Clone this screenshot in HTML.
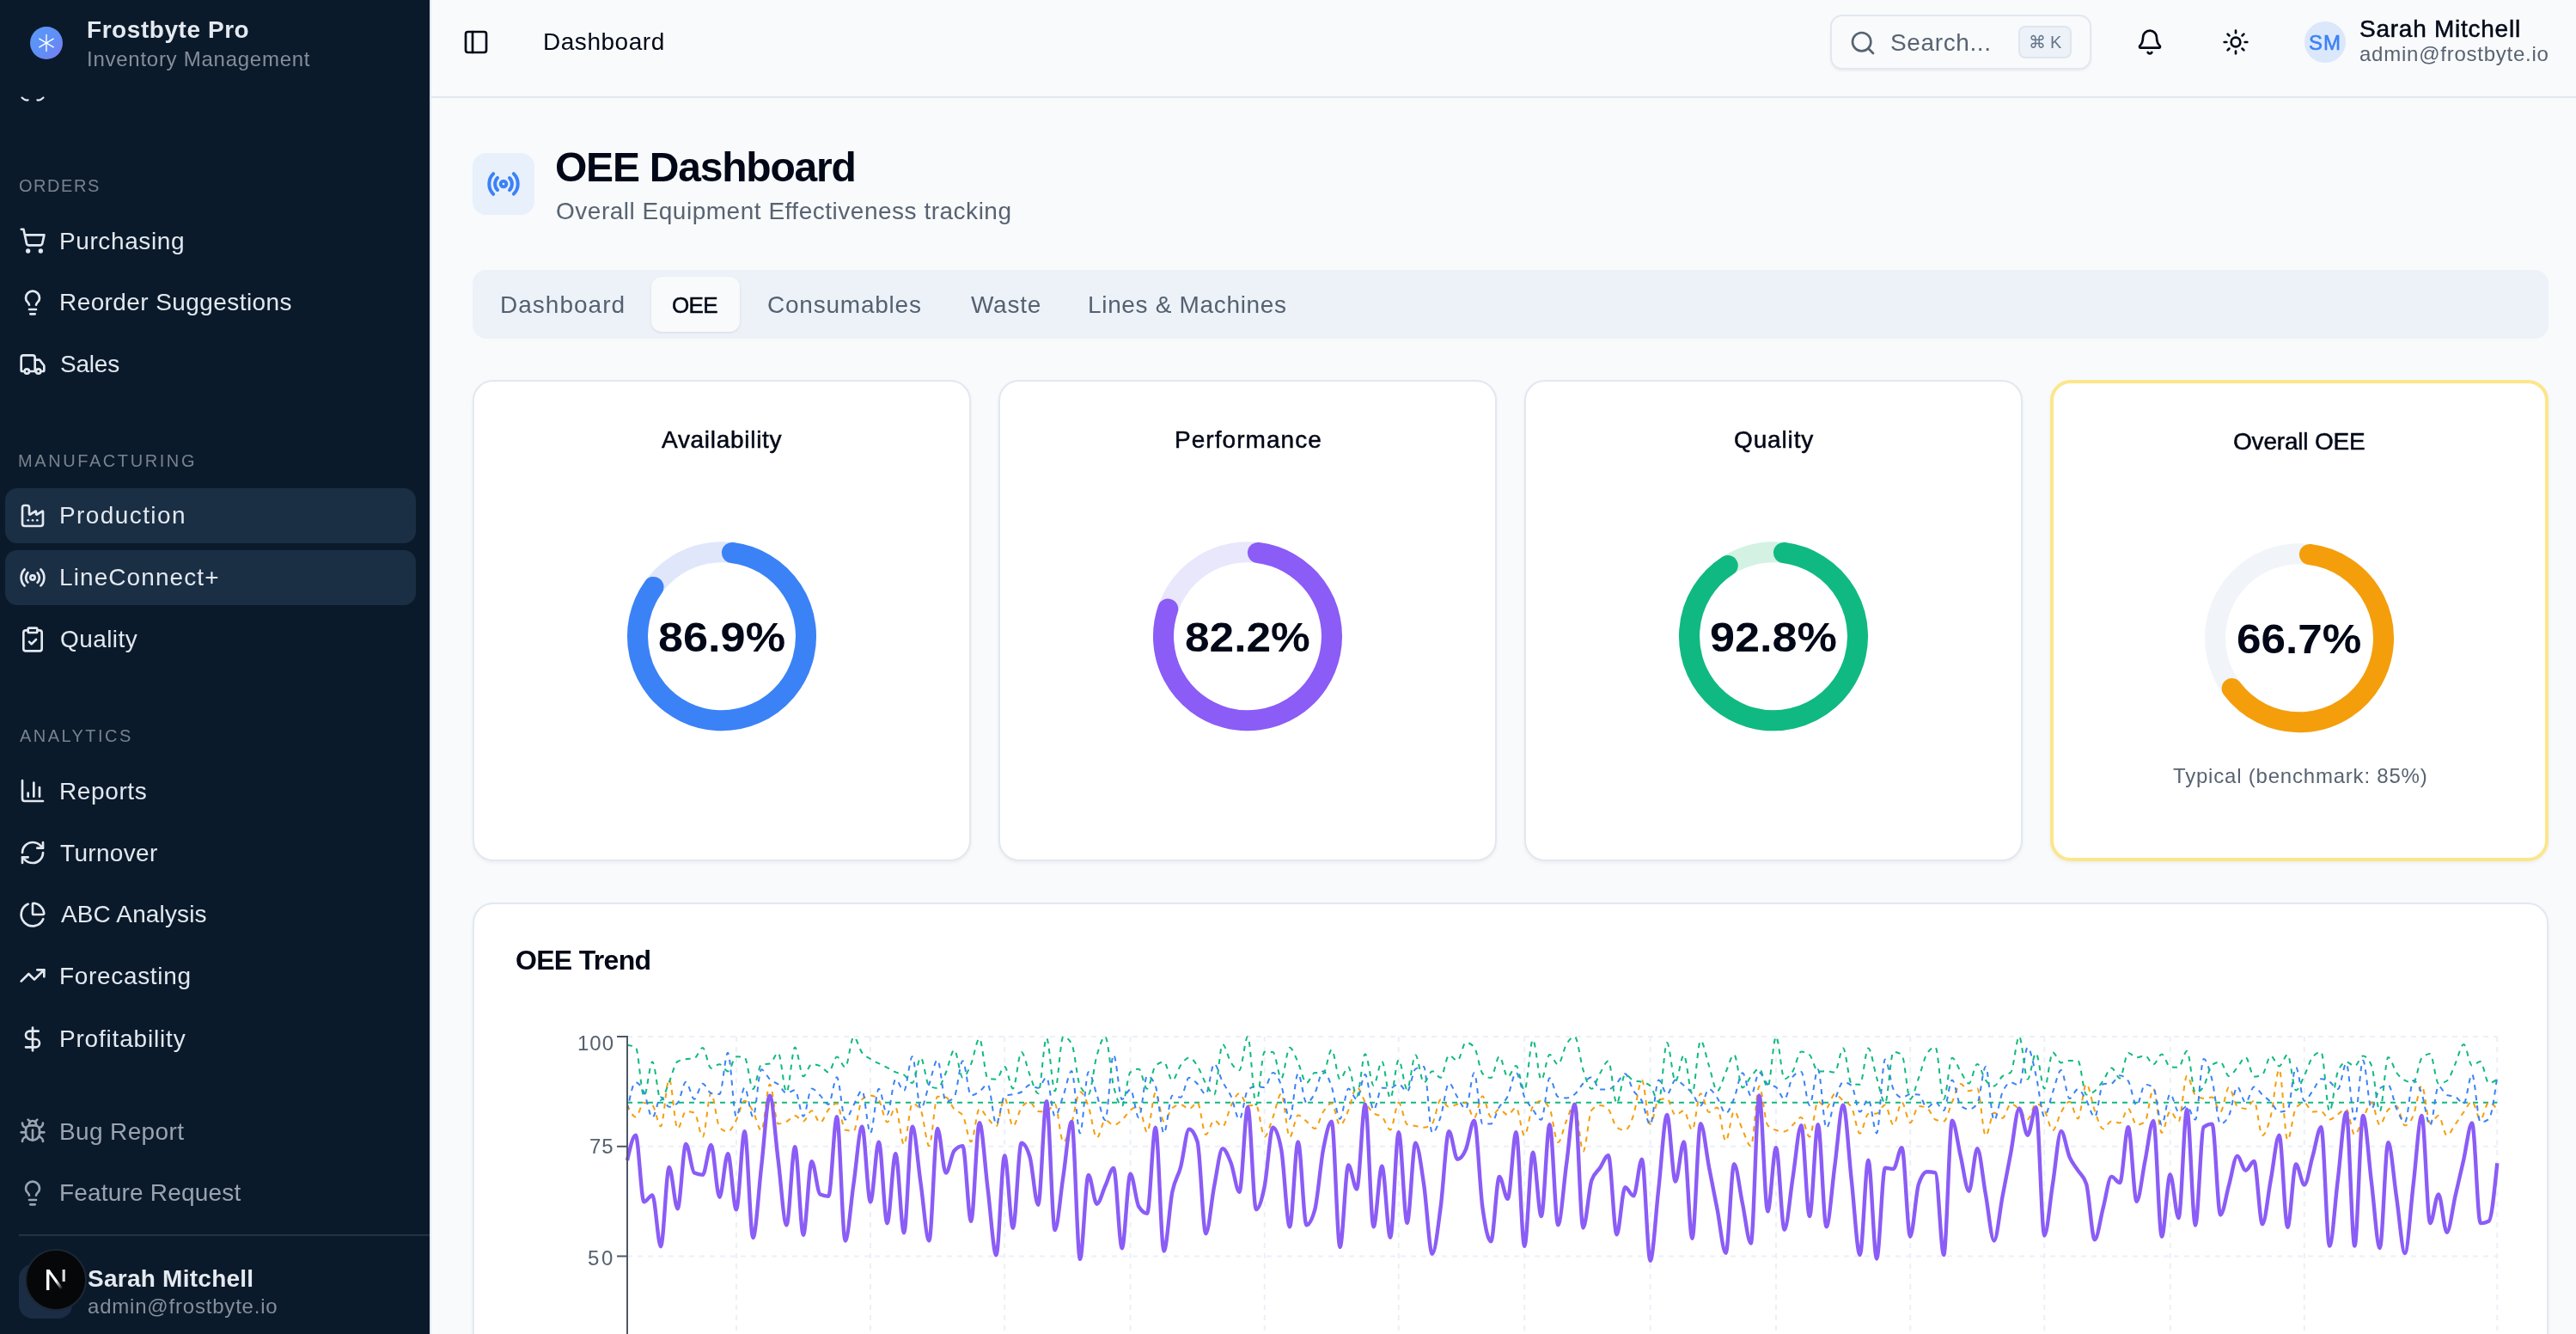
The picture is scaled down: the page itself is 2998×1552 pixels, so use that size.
<!DOCTYPE html><html><head><meta charset="utf-8"><style>
html,body{margin:0;padding:0;}
body{width:2998px;height:1552px;overflow:hidden;position:relative;background:#f8fafc;font-family:"Liberation Sans",sans-serif;}
.t{position:absolute;white-space:nowrap;will-change:transform;}
.b{position:absolute;box-sizing:border-box;}
.ic{position:absolute;overflow:visible;}
</style></head><body>
<div class="b" style="left:0px;top:0px;width:500px;height:1552px;background:#0b1a2a;"></div>
<div class="b" style="left:500px;top:0px;width:2px;height:1552px;background:#e2e8f0;"></div>
<div class="b" style="left:35px;top:31px;width:38px;height:38px;border-radius:50%;background:linear-gradient(135deg,#5a98f8 0%,#5f8ff6 55%,#7b7cf0 100%);"></div>
<svg class="ic" style="left:35px;top:31px;width:38px;height:38px" viewBox="0 0 38 38" stroke="#fff" stroke-width="1.4" stroke-linecap="round"><line x1="19" y1="9.5" x2="19" y2="28.5"/><line x1="10.8" y1="14.2" x2="27.2" y2="23.8"/><line x1="10.8" y1="23.8" x2="27.2" y2="14.2"/></svg>
<svg class="ic" style="left:0;top:0;width:200px;height:130px" viewBox="0 0 200 130" fill="none" stroke="#e2e8f0" stroke-width="2.2" stroke-linecap="round"><path d="M25.5 113.6 Q29 117.4 32.6 116.4"/><path d="M43.4 116.4 Q47 117.4 50.5 113.6"/></svg>
<svg class="ic" style="left:22.0px;top:264.3px;width:32px;height:32px;" viewBox="0 0 24 24" fill="none" stroke="#e2e8f0" stroke-width="2" stroke-linecap="round" stroke-linejoin="round"><circle cx="8" cy="21" r="1"/><circle cx="19" cy="21" r="1"/><path d="M2.05 2.05h2l2.66 12.42a2 2 0 0 0 2 1.58h9.78a2 2 0 0 0 1.95-1.57l1.65-7.43H5.12"/></svg>
<svg class="ic" style="left:22.0px;top:336.0px;width:32px;height:32px;" viewBox="0 0 24 24" fill="none" stroke="#e2e8f0" stroke-width="2" stroke-linecap="round" stroke-linejoin="round"><path d="M15 14c.2-1 .7-1.7 1.5-2.5 1-.9 1.5-2.2 1.5-3.5A6 6 0 0 0 6 8c0 1 .2 2.2 1.5 3.5.7.7 1.3 1.5 1.5 2.5"/><path d="M9 18h6"/><path d="M10 22h4"/></svg>
<svg class="ic" style="left:22.0px;top:407.5px;width:32px;height:32px;" viewBox="0 0 24 24" fill="none" stroke="#e2e8f0" stroke-width="2" stroke-linecap="round" stroke-linejoin="round"><path d="M14 18V6a2 2 0 0 0-2-2H4a2 2 0 0 0-2 2v11a1 1 0 0 0 1 1h2"/><path d="M15 18H9"/><path d="M19 18h2a1 1 0 0 0 1-1v-3.65a1 1 0 0 0-.22-.624l-3.48-4.35A1 1 0 0 0 17.52 8H14"/><circle cx="17" cy="18" r="2"/><circle cx="7" cy="18" r="2"/></svg>
<div class="b" style="left:6px;top:567.8px;width:478px;height:64px;background:#1a2e44;border-radius:14px;"></div>
<svg class="ic" style="left:22.0px;top:583.8px;width:32px;height:32px;" viewBox="0 0 24 24" fill="none" stroke="#e2e8f0" stroke-width="2" stroke-linecap="round" stroke-linejoin="round"><path d="M12 16h.01"/><path d="M16 16h.01"/><path d="M3 19a2 2 0 0 0 2 2h14a2 2 0 0 0 2-2V8.5a.5.5 0 0 0-.769-.422l-4.462 2.844A.5.5 0 0 1 15 10.5v-2a.5.5 0 0 0-.769-.422L9.77 10.922A.5.5 0 0 1 9 10.5V5a2 2 0 0 0-2-2H5a2 2 0 0 0-2 2z"/><path d="M8 16h.01"/></svg>
<div class="b" style="left:6px;top:639.8px;width:478px;height:64px;background:#1a2e44;border-radius:14px;"></div>
<svg class="ic" style="left:22.0px;top:655.8px;width:32px;height:32px;" viewBox="0 0 24 24" fill="none" stroke="#e2e8f0" stroke-width="2" stroke-linecap="round" stroke-linejoin="round"><path d="M4.9 19.1C1 15.2 1 8.8 4.9 4.9"/><path d="M7.8 16.2c-2.3-2.3-2.3-6.1 0-8.5"/><circle cx="12" cy="12" r="2"/><path d="M16.2 7.8c2.3 2.3 2.3 6.1 0 8.5"/><path d="M19.1 4.9C23 8.8 23 15.1 19.1 19"/></svg>
<svg class="ic" style="left:22.0px;top:727.8px;width:32px;height:32px;" viewBox="0 0 24 24" fill="none" stroke="#e2e8f0" stroke-width="2" stroke-linecap="round" stroke-linejoin="round"><rect width="8" height="4" x="8" y="2" rx="1" ry="1"/><path d="M16 4h2a2 2 0 0 1 2 2v14a2 2 0 0 1-2 2H6a2 2 0 0 1-2-2V6a2 2 0 0 1 2-2h2"/><path d="m9 14 2 2 4-4"/></svg>
<svg class="ic" style="left:22.0px;top:904.4px;width:32px;height:32px;" viewBox="0 0 24 24" fill="none" stroke="#e2e8f0" stroke-width="2" stroke-linecap="round" stroke-linejoin="round"><path d="M3 3v16a2 2 0 0 0 2 2h16"/><path d="M18 17V9"/><path d="M13 17V5"/><path d="M8 17v-3"/></svg>
<svg class="ic" style="left:22.0px;top:976.3px;width:32px;height:32px;" viewBox="0 0 24 24" fill="none" stroke="#e2e8f0" stroke-width="2" stroke-linecap="round" stroke-linejoin="round"><path d="M3 12a9 9 0 0 1 9-9 9.75 9.75 0 0 1 6.74 2.74L21 8"/><path d="M21 3v5h-5"/><path d="M21 12a9 9 0 0 1-9 9 9.75 9.75 0 0 1-6.74-2.74L3 16"/><path d="M8 16H3v5"/></svg>
<svg class="ic" style="left:22.0px;top:1047.6px;width:32px;height:32px;" viewBox="0 0 24 24" fill="none" stroke="#e2e8f0" stroke-width="2" stroke-linecap="round" stroke-linejoin="round"><path d="M21 12c.552 0 1.005-.449.95-.998a10 10 0 0 0-8.953-8.951c-.55-.055-.998.398-.998.95v8a1 1 0 0 0 1 1z"/><path d="M21.21 15.89A10 10 0 1 1 8 2.83"/></svg>
<svg class="ic" style="left:22.0px;top:1119.3px;width:32px;height:32px;" viewBox="0 0 24 24" fill="none" stroke="#e2e8f0" stroke-width="2" stroke-linecap="round" stroke-linejoin="round"><polyline points="22 7 13.5 15.5 8.5 10.5 2 17"/><polyline points="16 7 22 7 22 13"/></svg>
<svg class="ic" style="left:22.0px;top:1192.7px;width:32px;height:32px;" viewBox="0 0 24 24" fill="none" stroke="#e2e8f0" stroke-width="2" stroke-linecap="round" stroke-linejoin="round"><line x1="12" x2="12" y1="2" y2="22"/><path d="M17 5H9.5a3.5 3.5 0 0 0 0 7h5a3.5 3.5 0 0 1 0 7H6"/></svg>
<svg class="ic" style="left:22.0px;top:1300.3px;width:32px;height:32px;" viewBox="0 0 24 24" fill="none" stroke="#9aa3b0" stroke-width="2" stroke-linecap="round" stroke-linejoin="round"><path d="m8 2 1.88 1.88"/><path d="M14.12 3.88 16 2"/><path d="M9 7.13v-1a3.003 3.003 0 1 1 6 0v1"/><path d="M12 20c-3.3 0-6-2.7-6-6v-3a4 4 0 0 1 4-4h4a4 4 0 0 1 4 4v3c0 3.3-2.7 6-6 6"/><path d="M12 20v-9"/><path d="M6.53 9C4.6 8.8 3 7.1 3 5"/><path d="M6 13H2"/><path d="M3 21c0-2.1 1.7-3.9 3.8-4"/><path d="M20.97 5c0 2.1-1.6 3.8-3.5 4"/><path d="M22 13h-4"/><path d="M17.2 17c2.1.1 3.8 1.9 3.8 4"/></svg>
<svg class="ic" style="left:22.0px;top:1371.7px;width:32px;height:32px;" viewBox="0 0 24 24" fill="none" stroke="#9aa3b0" stroke-width="2" stroke-linecap="round" stroke-linejoin="round"><path d="M15 14c.2-1 .7-1.7 1.5-2.5 1-.9 1.5-2.2 1.5-3.5A6 6 0 0 0 6 8c0 1 .2 2.2 1.5 3.5.7.7 1.3 1.5 1.5 2.5"/><path d="M9 18h6"/><path d="M10 22h4"/></svg>
<div class="b" style="left:22px;top:1436px;width:478px;height:2px;background:#253243;"></div>
<div class="b" style="left:22px;top:1471px;width:62px;height:63px;background:#1b2d44;border-radius:16px;"></div>
<div class="b" style="left:29px;top:1453px;width:72px;height:72px;background:#050709;border-radius:50%;border:2px solid #1c2733;"></div>
<svg class="ic" style="left:29px;top:1453px;width:72px;height:72px" viewBox="0 0 72 72"><defs><linearGradient id="ng" x1="0" y1="0" x2="1" y2="1"><stop offset="0.55" stop-color="#fff"/><stop offset="0.9" stop-color="#fff" stop-opacity="0"/></linearGradient></defs><path d="M25 48V24h3.6l17.4 24h-4L28.4 29v19z" fill="url(#ng)"/><rect x="43.6" y="24" width="3.2" height="14" fill="#fff" fill-opacity="0.85"/></svg>
<div class="b" style="left:502px;top:112px;width:2496px;height:2px;background:#e2e8f0;"></div>
<svg class="ic" style="left:538.0px;top:33.0px;width:32px;height:32px;" viewBox="0 0 24 24" fill="none" stroke="#020817" stroke-width="2" stroke-linecap="round" stroke-linejoin="round"><rect width="18" height="18" x="3" y="3" rx="2"/><path d="M9 3v18"/></svg>
<div class="b" style="left:2130px;top:17px;width:304px;height:64px;border:2px solid #e2e8f0;border-radius:14px;background:#f8fafc;box-shadow:0 2px 3px rgba(15,23,42,0.05);"></div>
<svg class="ic" style="left:2152.0px;top:34.0px;width:32px;height:32px;" viewBox="0 0 24 24" fill="none" stroke="#586371" stroke-width="2" stroke-linecap="round" stroke-linejoin="round"><circle cx="11" cy="11" r="8"/><path d="m21 21-4.3-4.3"/></svg>
<div class="b" style="left:2349px;top:30px;width:62px;height:38px;border:2px solid #dfe6ee;border-radius:8px;background:#edf2f8;"></div>
<div class="t" style="left:2349px;top:38px;width:62px;text-align:center;font-size:20px;line-height:22px;color:#64748b">&#8984; K</div>
<svg class="ic" style="left:2486.0px;top:33.0px;width:32px;height:32px;" viewBox="0 0 24 24" fill="none" stroke="#020817" stroke-width="2" stroke-linecap="round" stroke-linejoin="round"><path d="M10.268 21a2 2 0 0 0 3.464 0"/><path d="M3.262 15.326A1 1 0 0 0 4 17h16a1 1 0 0 0 .74-1.673C19.41 13.956 18 12.499 18 8A6 6 0 0 0 6 8c0 4.499-1.411 5.956-2.738 7.326"/></svg>
<svg class="ic" style="left:2586.0px;top:33.0px;width:32px;height:32px;" viewBox="0 0 24 24" fill="none" stroke="#020817" stroke-width="2" stroke-linecap="round" stroke-linejoin="round"><circle cx="12" cy="12" r="4"/><path d="M12 2v2"/><path d="M12 20v2"/><path d="m4.93 4.93 1.41 1.41"/><path d="m17.66 17.66 1.41 1.41"/><path d="M2 12h2"/><path d="M20 12h2"/><path d="m6.34 17.66-1.41 1.41"/><path d="m19.07 4.93-1.41 1.41"/></svg>
<div class="b" style="left:2682px;top:25px;width:48px;height:48px;border-radius:50%;background:#dbe7fb;"></div>
<div class="b" style="left:550px;top:178px;width:72px;height:72px;border-radius:16px;background:#e8f0fc;"></div>
<svg class="ic" style="left:566.0px;top:194.0px;width:40px;height:40px;" viewBox="0 0 24 24" fill="none" stroke="#3b82f6" stroke-width="2.4" stroke-linecap="round" stroke-linejoin="round"><path d="M4.9 19.1C1 15.2 1 8.8 4.9 4.9"/><path d="M7.8 16.2c-2.3-2.3-2.3-6.1 0-8.5"/><circle cx="12" cy="12" r="2"/><path d="M16.2 7.8c2.3 2.3 2.3 6.1 0 8.5"/><path d="M19.1 4.9C23 8.8 23 15.1 19.1 19"/></svg>
<div class="b" style="left:550px;top:314px;width:2416px;height:80px;border-radius:16px;background:#edf2f9;"></div>
<div class="b" style="left:758px;top:322px;width:103px;height:64px;border-radius:12px;background:#f8fafc;box-shadow:0 1px 3px rgba(15,23,42,0.10);"></div>
<div class="b" style="left:550px;top:442px;width:580px;height:560px;border:2px solid #e2e8f0;border-radius:24px;background:#fff;box-shadow:0 2px 4px rgba(15,23,42,0.05);"></div>
<div class="b" style="left:1162px;top:442px;width:580px;height:560px;border:2px solid #e2e8f0;border-radius:24px;background:#fff;box-shadow:0 2px 4px rgba(15,23,42,0.05);"></div>
<div class="b" style="left:1774px;top:442px;width:580px;height:560px;border:2px solid #e2e8f0;border-radius:24px;background:#fff;box-shadow:0 2px 4px rgba(15,23,42,0.05);"></div>
<div class="b" style="left:2386px;top:442px;width:580px;height:560px;border:4px solid #fde68a;border-radius:24px;background:#fff;box-shadow:0 2px 4px rgba(15,23,42,0.05);"></div>
<svg class="ic" width="2998" height="1552" style="left:0;top:0"><circle cx="840" cy="740.3" r="98" fill="none" stroke="#e0e7fb" stroke-width="24"/><path d="M851.94 643.03 A98 98 0 1 1 760.56 682.92" fill="none" stroke="#3b82f6" stroke-width="24" stroke-linecap="round"/><circle cx="1452" cy="740.3" r="98" fill="none" stroke="#e9e7fb" stroke-width="24"/><path d="M1463.94 643.03 A98 98 0 1 1 1359.29 708.52" fill="none" stroke="#8b5cf6" stroke-width="24" stroke-linecap="round"/><circle cx="2064" cy="740.3" r="98" fill="none" stroke="#d3f2e4" stroke-width="24"/><path d="M2075.94 643.03 A98 98 0 1 1 2010.74 658.04" fill="none" stroke="#10b981" stroke-width="24" stroke-linecap="round"/><circle cx="2676" cy="742.3" r="98" fill="none" stroke="#f1f4f8" stroke-width="24"/><path d="M2687.94 645.03 A98 98 0 1 1 2597.61 801.11" fill="none" stroke="#f59e0b" stroke-width="24" stroke-linecap="round"/></svg>
<div class="b" style="left:550px;top:1050px;width:2416px;height:600px;border:2px solid #e2e8f0;border-radius:24px;background:#fff;box-shadow:0 2px 4px rgba(15,23,42,0.05);"></div>
<svg class="ic" width="2998" height="1552" style="left:0;top:0"><line x1="730" y1="1206.0" x2="2906.3" y2="1206.0" stroke="#ebf0f7" stroke-width="2" stroke-dasharray="6 6"/><line x1="730" y1="1333.8" x2="2906.3" y2="1333.8" stroke="#ebf0f7" stroke-width="2" stroke-dasharray="6 6"/><line x1="730" y1="1461.5" x2="2906.3" y2="1461.5" stroke="#ebf0f7" stroke-width="2" stroke-dasharray="6 6"/><line x1="730" y1="1589.2" x2="2906.3" y2="1589.2" stroke="#ebf0f7" stroke-width="2" stroke-dasharray="6 6"/><line x1="856.9" y1="1206" x2="856.9" y2="1560" stroke="#ebf0f7" stroke-width="2" stroke-dasharray="6 6"/><line x1="1013.0" y1="1206" x2="1013.0" y2="1560" stroke="#ebf0f7" stroke-width="2" stroke-dasharray="6 6"/><line x1="1169.2" y1="1206" x2="1169.2" y2="1560" stroke="#ebf0f7" stroke-width="2" stroke-dasharray="6 6"/><line x1="1315.6" y1="1206" x2="1315.6" y2="1560" stroke="#ebf0f7" stroke-width="2" stroke-dasharray="6 6"/><line x1="1471.7" y1="1206" x2="1471.7" y2="1560" stroke="#ebf0f7" stroke-width="2" stroke-dasharray="6 6"/><line x1="1627.8" y1="1206" x2="1627.8" y2="1560" stroke="#ebf0f7" stroke-width="2" stroke-dasharray="6 6"/><line x1="1774.2" y1="1206" x2="1774.2" y2="1560" stroke="#ebf0f7" stroke-width="2" stroke-dasharray="6 6"/><line x1="1920.6" y1="1206" x2="1920.6" y2="1560" stroke="#ebf0f7" stroke-width="2" stroke-dasharray="6 6"/><line x1="2067.0" y1="1206" x2="2067.0" y2="1560" stroke="#ebf0f7" stroke-width="2" stroke-dasharray="6 6"/><line x1="2223.2" y1="1206" x2="2223.2" y2="1560" stroke="#ebf0f7" stroke-width="2" stroke-dasharray="6 6"/><line x1="2379.3" y1="1206" x2="2379.3" y2="1560" stroke="#ebf0f7" stroke-width="2" stroke-dasharray="6 6"/><line x1="2525.7" y1="1206" x2="2525.7" y2="1560" stroke="#ebf0f7" stroke-width="2" stroke-dasharray="6 6"/><line x1="2681.8" y1="1206" x2="2681.8" y2="1560" stroke="#ebf0f7" stroke-width="2" stroke-dasharray="6 6"/><line x1="2906.3" y1="1206" x2="2906.3" y2="1560" stroke="#ebf0f7" stroke-width="2" stroke-dasharray="6 6"/><line x1="730" y1="1282.7" x2="2906.3" y2="1282.7" stroke="#10b981" stroke-width="2" stroke-dasharray="6 6"/><path d="M730.0,1285.4C733.3,1292.5 736.5,1299.5 739.8,1299.5C743.0,1299.5 746.3,1283.0 749.5,1283.0C752.8,1283.0 756.0,1283.9 759.3,1285.8C762.5,1287.6 765.8,1310.5 769.0,1310.5C772.3,1310.5 775.5,1255.4 778.8,1255.4C782.0,1255.4 785.3,1313.1 788.6,1313.1C791.8,1313.1 795.1,1293.1 798.3,1293.1C801.6,1293.1 804.8,1293.6 808.1,1294.5C811.3,1295.5 814.6,1322.6 817.8,1322.6C821.1,1322.6 824.3,1271.6 827.6,1271.6C830.8,1271.6 834.1,1307.9 837.4,1311.4C840.6,1314.8 843.9,1316.5 847.1,1316.5C850.4,1316.5 853.6,1309.1 856.9,1303.1C860.1,1297.1 863.4,1280.7 866.6,1280.7C869.9,1280.7 873.1,1287.2 876.4,1292.9C879.6,1298.7 882.9,1315.3 886.1,1315.3C889.4,1315.3 892.7,1261.5 895.9,1261.5C899.2,1261.5 902.4,1307.5 905.7,1307.5C908.9,1307.5 912.2,1306.6 915.4,1305.0C918.7,1303.5 921.9,1298.1 925.2,1298.1C928.4,1298.1 931.7,1304.4 934.9,1304.4C938.2,1304.4 941.4,1292.3 944.7,1292.3C948.0,1292.3 951.2,1306.1 954.5,1306.1C957.7,1306.1 961.0,1294.7 964.2,1291.0C967.5,1287.3 970.7,1283.8 974.0,1283.8C977.2,1283.8 980.5,1313.8 983.7,1314.6C987.0,1315.3 990.2,1315.7 993.5,1315.7C996.8,1315.7 1000.0,1282.2 1003.3,1279.1C1006.5,1276.0 1009.8,1274.5 1013.0,1274.5C1016.3,1274.5 1019.5,1276.3 1022.8,1279.9C1026.0,1283.5 1029.3,1305.5 1032.5,1305.5C1035.8,1305.5 1039.0,1288.7 1042.3,1288.7C1045.5,1288.7 1048.8,1331.7 1052.1,1331.7C1055.3,1331.7 1058.6,1283.8 1061.8,1283.8C1065.1,1283.8 1068.3,1286.5 1071.6,1291.7C1074.8,1297.0 1078.1,1333.1 1081.3,1333.1C1084.6,1333.1 1087.8,1275.7 1091.1,1275.7C1094.3,1275.7 1097.6,1275.9 1100.8,1276.4C1104.1,1276.9 1107.4,1287.0 1110.6,1290.4C1113.9,1293.9 1117.1,1292.7 1120.4,1297.3C1123.6,1301.8 1126.9,1328.2 1130.1,1328.2C1133.4,1328.2 1136.6,1290.0 1139.9,1290.0C1143.1,1290.0 1146.4,1297.7 1149.6,1301.0C1152.9,1304.4 1156.2,1310.3 1159.4,1310.3C1162.7,1310.3 1165.9,1277.4 1169.2,1277.4C1172.4,1277.4 1175.7,1310.3 1178.9,1310.3C1182.2,1310.3 1185.4,1293.1 1188.7,1288.7C1191.9,1284.2 1195.2,1282.0 1198.4,1282.0C1201.7,1282.0 1204.9,1292.9 1208.2,1293.1C1211.5,1293.3 1214.7,1293.4 1218.0,1293.4C1221.2,1293.4 1224.5,1284.4 1227.7,1284.4C1231.0,1284.4 1234.2,1328.8 1237.5,1328.8C1240.7,1328.8 1244.0,1315.9 1247.2,1306.2C1250.5,1296.4 1253.7,1270.3 1257.0,1270.3C1260.2,1270.3 1263.5,1278.4 1266.8,1287.3C1270.0,1296.2 1273.3,1323.8 1276.5,1323.8C1279.8,1323.8 1283.0,1303.3 1286.3,1303.3C1289.5,1303.3 1292.8,1308.9 1296.0,1308.9C1299.3,1308.9 1302.5,1306.0 1305.8,1303.1C1309.0,1300.3 1312.3,1294.3 1315.6,1291.7C1318.8,1289.0 1322.1,1287.1 1325.3,1287.1C1328.6,1287.1 1331.8,1317.3 1335.1,1317.3C1338.3,1317.3 1341.6,1271.1 1344.8,1271.1C1348.1,1271.1 1351.3,1304.5 1354.6,1304.5C1357.8,1304.5 1361.1,1291.9 1364.3,1289.2C1367.6,1286.5 1370.9,1285.1 1374.1,1285.1C1377.4,1285.1 1380.6,1290.1 1383.9,1290.1C1387.1,1290.1 1390.4,1282.6 1393.6,1282.6C1396.9,1282.6 1400.1,1320.1 1403.4,1320.1C1406.6,1320.1 1409.9,1303.3 1413.1,1303.3C1416.4,1303.3 1419.6,1310.7 1422.9,1310.7C1426.2,1310.7 1429.4,1292.9 1432.7,1286.5C1435.9,1280.1 1439.2,1272.1 1442.4,1272.1C1445.7,1272.1 1448.9,1286.3 1452.2,1286.3C1455.4,1286.3 1458.7,1285.9 1461.9,1285.9C1465.2,1285.9 1468.4,1322.5 1471.7,1322.5C1475.0,1322.5 1478.2,1308.1 1481.5,1299.8C1484.7,1291.4 1488.0,1272.3 1491.2,1272.3C1494.5,1272.3 1497.7,1323.0 1501.0,1323.0C1504.2,1323.0 1507.5,1297.6 1510.7,1297.6C1514.0,1297.6 1517.2,1302.0 1520.5,1304.6C1523.7,1307.2 1527.0,1313.0 1530.3,1313.0C1533.5,1313.0 1536.8,1298.4 1540.0,1293.5C1543.3,1288.5 1546.5,1283.5 1549.8,1283.5C1553.0,1283.5 1556.3,1309.1 1559.5,1309.1C1562.8,1309.1 1566.0,1299.2 1569.3,1291.7C1572.5,1284.3 1575.8,1264.5 1579.0,1264.5C1582.3,1264.5 1585.6,1277.0 1588.8,1282.2C1592.1,1287.3 1595.3,1292.7 1598.6,1295.2C1601.8,1297.8 1605.1,1296.5 1608.3,1299.1C1611.6,1301.6 1614.8,1314.5 1618.1,1314.5C1621.3,1314.5 1624.6,1282.8 1627.8,1282.8C1631.1,1282.8 1634.4,1306.8 1637.6,1308.1C1640.9,1309.4 1644.1,1309.4 1647.4,1310.0C1650.6,1310.6 1653.9,1311.8 1657.1,1311.8C1660.4,1311.8 1663.6,1310.2 1666.9,1307.2C1670.1,1304.1 1673.4,1279.4 1676.6,1279.4C1679.9,1279.4 1683.1,1287.9 1686.4,1287.9C1689.7,1287.9 1692.9,1285.5 1696.2,1284.7C1699.4,1283.9 1702.7,1283.2 1705.9,1283.2C1709.2,1283.2 1712.4,1300.5 1715.7,1300.5C1718.9,1300.5 1722.2,1275.3 1725.4,1275.3C1728.7,1275.3 1731.9,1299.6 1735.2,1299.6C1738.4,1299.6 1741.7,1290.4 1745.0,1290.4C1748.2,1290.4 1751.5,1297.2 1754.7,1297.2C1758.0,1297.2 1761.2,1288.6 1764.5,1288.6C1767.7,1288.6 1771.0,1321.1 1774.2,1321.1C1777.5,1321.1 1780.7,1291.4 1784.0,1287.1C1787.2,1282.9 1790.5,1280.7 1793.8,1280.7C1797.0,1280.7 1800.3,1283.7 1803.5,1289.8C1806.8,1295.8 1810.0,1329.1 1813.3,1329.1C1816.5,1329.1 1819.8,1311.5 1823.0,1304.0C1826.3,1296.4 1829.5,1283.8 1832.8,1283.8C1836.0,1283.8 1839.3,1339.5 1842.5,1339.5C1845.8,1339.5 1849.1,1295.4 1852.3,1291.7C1855.6,1287.9 1858.8,1286.0 1862.1,1286.0C1865.3,1286.0 1868.6,1287.5 1871.8,1290.4C1875.1,1293.3 1878.3,1309.2 1881.6,1311.5C1884.8,1313.8 1888.1,1314.9 1891.3,1314.9C1894.6,1314.9 1897.9,1307.0 1901.1,1297.3C1904.4,1287.6 1907.6,1256.8 1910.9,1256.8C1914.1,1256.8 1917.4,1308.1 1920.6,1308.1C1923.9,1308.1 1927.1,1280.2 1930.4,1279.3C1933.6,1278.4 1936.9,1278.0 1940.1,1278.0C1943.4,1278.0 1946.6,1297.4 1949.9,1297.4C1953.2,1297.4 1956.4,1292.2 1959.7,1292.2C1962.9,1292.2 1966.2,1314.7 1969.4,1314.7C1972.7,1314.7 1975.9,1272.2 1979.2,1272.2C1982.4,1272.2 1985.7,1293.9 1988.9,1293.9C1992.2,1293.9 1995.4,1288.6 1998.7,1288.6C2001.9,1288.6 2005.2,1327.5 2008.5,1327.5C2011.7,1327.5 2015.0,1292.8 2018.2,1292.8C2021.5,1292.8 2024.7,1307.6 2028.0,1314.4C2031.2,1321.1 2034.5,1333.4 2037.7,1333.4C2041.0,1333.4 2044.2,1263.7 2047.5,1263.7C2050.7,1263.7 2054.0,1305.3 2057.3,1309.1C2060.5,1312.9 2063.8,1313.8 2067.0,1314.8C2070.3,1315.9 2073.5,1316.4 2076.8,1316.4C2080.0,1316.4 2083.3,1311.6 2086.5,1308.8C2089.8,1306.1 2093.0,1299.9 2096.3,1299.9C2099.5,1299.9 2102.8,1322.6 2106.0,1322.6C2109.3,1322.6 2112.6,1281.5 2115.8,1281.5C2119.1,1281.5 2122.3,1288.9 2125.6,1288.9C2128.8,1288.9 2132.1,1272.9 2135.3,1272.9C2138.6,1272.9 2141.8,1277.9 2145.1,1280.4C2148.3,1283.0 2151.6,1283.0 2154.8,1288.2C2158.1,1293.4 2161.3,1318.7 2164.6,1318.7C2167.9,1318.7 2171.1,1296.3 2174.4,1295.9C2177.6,1295.6 2180.9,1295.8 2184.1,1295.5C2187.4,1295.2 2190.6,1285.5 2193.9,1285.5C2197.1,1285.5 2200.4,1308.9 2203.6,1308.9C2206.9,1308.9 2210.1,1282.6 2213.4,1282.6C2216.7,1282.6 2219.9,1306.2 2223.2,1306.2C2226.4,1306.2 2229.7,1287.1 2232.9,1287.1C2236.2,1287.1 2239.4,1287.7 2242.7,1288.9C2245.9,1290.1 2249.2,1301.1 2252.4,1302.5C2255.7,1303.9 2258.9,1304.6 2262.2,1304.6C2265.4,1304.6 2268.7,1289.3 2272.0,1282.1C2275.2,1274.8 2278.5,1261.1 2281.7,1261.1C2285.0,1261.1 2288.2,1269.3 2291.5,1269.3C2294.7,1269.3 2298.0,1266.2 2301.2,1266.2C2304.5,1266.2 2307.7,1321.5 2311.0,1321.5C2314.2,1321.5 2317.5,1294.6 2320.7,1294.6C2324.0,1294.6 2327.3,1300.8 2330.5,1300.8C2333.8,1300.8 2337.0,1284.4 2340.3,1284.4C2343.5,1284.4 2346.8,1287.6 2350.0,1290.6C2353.3,1293.5 2356.5,1302.3 2359.8,1302.3C2363.0,1302.3 2366.3,1284.0 2369.5,1284.0C2372.8,1284.0 2376.1,1286.5 2379.3,1291.5C2382.6,1296.4 2385.8,1315.1 2389.1,1315.1C2392.3,1315.1 2395.6,1299.6 2398.8,1294.0C2402.1,1288.4 2405.3,1281.7 2408.6,1281.7C2411.8,1281.7 2415.1,1301.4 2418.3,1301.4C2421.6,1301.4 2424.8,1261.2 2428.1,1261.2C2431.4,1261.2 2434.6,1283.4 2437.9,1292.1C2441.1,1300.8 2444.4,1313.4 2447.6,1313.4C2450.9,1313.4 2454.1,1304.4 2457.4,1304.4C2460.6,1304.4 2463.9,1306.5 2467.1,1306.5C2470.4,1306.5 2473.6,1290.0 2476.9,1290.0C2480.1,1290.0 2483.4,1308.7 2486.7,1308.7C2489.9,1308.7 2493.2,1307.5 2496.4,1305.0C2499.7,1302.5 2502.9,1266.8 2506.2,1266.8C2509.4,1266.8 2512.7,1317.9 2515.9,1317.9C2519.2,1317.9 2522.4,1292.7 2525.7,1292.7C2528.9,1292.7 2532.2,1304.8 2535.5,1304.8C2538.7,1304.8 2542.0,1251.5 2545.2,1251.5C2548.5,1251.5 2551.7,1271.4 2555.0,1274.0C2558.2,1276.6 2561.5,1277.9 2564.7,1277.9C2568.0,1277.9 2571.2,1276.6 2574.5,1276.6C2577.7,1276.6 2581.0,1293.5 2584.2,1293.5C2587.5,1293.5 2590.8,1264.9 2594.0,1264.9C2597.3,1264.9 2600.5,1285.2 2603.8,1287.1C2607.0,1288.9 2610.3,1289.9 2613.5,1289.9C2616.8,1289.9 2620.0,1280.8 2623.3,1280.8C2626.5,1280.8 2629.8,1321.0 2633.0,1321.0C2636.3,1321.0 2639.5,1311.1 2642.8,1298.3C2646.1,1285.6 2649.3,1244.4 2652.6,1244.4C2655.8,1244.4 2659.1,1326.3 2662.3,1326.3C2665.6,1326.3 2668.8,1292.8 2672.1,1288.9C2675.3,1285.0 2678.6,1283.1 2681.8,1283.1C2685.1,1283.1 2688.3,1293.4 2691.6,1293.4C2694.9,1293.4 2698.1,1293.1 2701.4,1293.1C2704.6,1293.1 2707.9,1302.6 2711.1,1302.6C2714.4,1302.6 2717.6,1298.3 2720.9,1296.3C2724.1,1294.3 2727.4,1290.6 2730.6,1290.6C2733.9,1290.6 2737.1,1320.3 2740.4,1320.3C2743.6,1320.3 2746.9,1307.8 2750.2,1301.5C2753.4,1295.2 2756.7,1282.6 2759.9,1282.6C2763.2,1282.6 2766.4,1308.8 2769.7,1308.8C2772.9,1308.8 2776.2,1293.8 2779.4,1291.1C2782.7,1288.3 2785.9,1287.0 2789.2,1287.0C2792.4,1287.0 2795.7,1309.4 2798.9,1309.4C2802.2,1309.4 2805.5,1305.4 2808.7,1297.7C2812.0,1290.0 2815.2,1263.1 2818.5,1263.1C2821.7,1263.1 2825.0,1306.6 2828.2,1306.6C2831.5,1306.6 2834.7,1297.9 2838.0,1297.9C2841.2,1297.9 2844.5,1321.0 2847.7,1321.0C2851.0,1321.0 2854.3,1312.6 2857.5,1308.1C2860.8,1303.5 2864.0,1298.3 2867.3,1293.9C2870.5,1289.4 2873.8,1281.5 2877.0,1281.5C2880.3,1281.5 2883.5,1302.6 2886.8,1302.6C2890.0,1302.6 2893.3,1282.2 2896.5,1282.2C2899.8,1282.2 2903.0,1286.6 2906.3,1290.9" fill="none" stroke="#f59e0b" stroke-width="2" stroke-dasharray="6 6"/><path d="M730.0,1292.5C733.3,1275.8 736.5,1259.1 739.8,1259.1C743.0,1259.1 746.3,1263.9 749.5,1270.8C752.8,1277.6 756.0,1300.3 759.3,1300.3C762.5,1300.3 765.8,1276.5 769.0,1276.5C772.3,1276.5 775.5,1287.7 778.8,1287.7C782.0,1287.7 785.3,1286.2 788.6,1283.2C791.8,1280.2 795.1,1258.8 798.3,1258.8C801.6,1258.8 804.8,1278.7 808.1,1278.7C811.3,1278.7 814.6,1260.7 817.8,1260.7C821.1,1260.7 824.3,1271.2 827.6,1271.9C830.8,1272.5 834.1,1272.9 837.4,1272.9C840.6,1272.9 843.9,1224.8 847.1,1224.8C850.4,1224.8 853.6,1299.4 856.9,1299.4C860.1,1299.4 863.4,1265.3 866.6,1265.3C869.9,1265.3 873.1,1299.2 876.4,1299.2C879.6,1299.2 882.9,1244.3 886.1,1244.3C889.4,1244.3 892.7,1252.7 895.9,1255.6C899.2,1258.5 902.4,1258.9 905.7,1261.6C908.9,1264.3 912.2,1271.9 915.4,1271.9C918.7,1271.9 921.9,1268.2 925.2,1268.2C928.4,1268.2 931.7,1298.7 934.9,1298.7C938.2,1298.7 941.4,1266.5 944.7,1266.5C948.0,1266.5 951.2,1271.4 954.5,1274.4C957.7,1277.5 961.0,1284.9 964.2,1284.9C967.5,1284.9 970.7,1253.3 974.0,1253.3C977.2,1253.3 980.5,1302.7 983.7,1302.7C987.0,1302.7 990.2,1291.4 993.5,1285.7C996.8,1280.1 1000.0,1268.9 1003.3,1268.9C1006.5,1268.9 1009.8,1318.4 1013.0,1318.4C1016.3,1318.4 1019.5,1266.7 1022.8,1266.7C1026.0,1266.7 1029.3,1296.8 1032.5,1296.8C1035.8,1296.8 1039.0,1255.8 1042.3,1255.8C1045.5,1255.8 1048.8,1269.0 1052.1,1269.0C1055.3,1269.0 1058.6,1229.2 1061.8,1229.2C1065.1,1229.2 1068.3,1290.0 1071.6,1290.0C1074.8,1290.0 1078.1,1271.2 1081.3,1261.8C1084.6,1252.3 1087.8,1233.2 1091.1,1233.2C1094.3,1233.2 1097.6,1281.7 1100.8,1281.7C1104.1,1281.7 1107.4,1279.9 1110.6,1276.2C1113.9,1272.5 1117.1,1234.3 1120.4,1234.3C1123.6,1234.3 1126.9,1274.5 1130.1,1274.5C1133.4,1274.5 1136.6,1272.0 1139.9,1269.9C1143.1,1267.7 1146.4,1261.7 1149.6,1261.7C1152.9,1261.7 1156.2,1307.9 1159.4,1307.9C1162.7,1307.9 1165.9,1276.4 1169.2,1275.1C1172.4,1273.8 1175.7,1274.0 1178.9,1273.2C1182.2,1272.4 1185.4,1272.3 1188.7,1270.5C1191.9,1268.7 1195.2,1262.2 1198.4,1262.2C1201.7,1262.2 1204.9,1265.8 1208.2,1265.8C1211.5,1265.8 1214.7,1253.6 1218.0,1253.6C1221.2,1253.6 1224.5,1298.6 1227.7,1298.6C1231.0,1298.6 1234.2,1283.4 1237.5,1274.7C1240.7,1265.9 1244.0,1246.1 1247.2,1246.1C1250.5,1246.1 1253.7,1318.4 1257.0,1318.4C1260.2,1318.4 1263.5,1247.2 1266.8,1247.2C1270.0,1247.2 1273.3,1264.4 1276.5,1273.8C1279.8,1283.1 1283.0,1303.2 1286.3,1303.2C1289.5,1303.2 1292.8,1227.1 1296.0,1227.1C1299.3,1227.1 1302.5,1279.0 1305.8,1279.0C1309.0,1279.0 1312.3,1267.3 1315.6,1267.3C1318.8,1267.3 1322.1,1300.3 1325.3,1300.3C1328.6,1300.3 1331.8,1251.7 1335.1,1251.7C1338.3,1251.7 1341.6,1255.6 1344.8,1263.5C1348.1,1271.4 1351.3,1318.4 1354.6,1318.4C1357.8,1318.4 1361.1,1274.7 1364.3,1274.7C1367.6,1274.7 1370.9,1276.7 1374.1,1276.7C1377.4,1276.7 1380.6,1253.8 1383.9,1253.8C1387.1,1253.8 1390.4,1257.8 1393.6,1261.0C1396.9,1264.2 1400.1,1273.1 1403.4,1273.1C1406.6,1273.1 1409.9,1237.7 1413.1,1237.7C1416.4,1237.7 1419.6,1252.4 1422.9,1258.7C1426.2,1264.9 1429.4,1268.1 1432.7,1275.4C1435.9,1282.7 1439.2,1302.3 1442.4,1302.3C1445.7,1302.3 1448.9,1271.1 1452.2,1268.2C1455.4,1265.3 1458.7,1263.8 1461.9,1263.8C1465.2,1263.8 1468.4,1265.1 1471.7,1265.1C1475.0,1265.1 1478.2,1248.0 1481.5,1248.0C1484.7,1248.0 1488.0,1254.1 1491.2,1263.0C1494.5,1272.0 1497.7,1301.7 1501.0,1301.7C1504.2,1301.7 1507.5,1248.8 1510.7,1248.8C1514.0,1248.8 1517.2,1282.8 1520.5,1282.8C1523.7,1282.8 1527.0,1277.9 1530.3,1271.8C1533.5,1265.7 1536.8,1246.2 1540.0,1246.2C1543.3,1246.2 1546.5,1255.2 1549.8,1264.4C1553.0,1273.7 1556.3,1301.8 1559.5,1301.8C1562.8,1301.8 1566.0,1266.6 1569.3,1266.6C1572.5,1266.6 1575.8,1278.9 1579.0,1278.9C1582.3,1278.9 1585.6,1250.1 1588.8,1250.1C1592.1,1250.1 1595.3,1291.3 1598.6,1291.3C1601.8,1291.3 1605.1,1265.7 1608.3,1265.7C1611.6,1265.7 1614.8,1265.8 1618.1,1265.8C1621.3,1265.8 1624.6,1261.2 1627.8,1261.2C1631.1,1261.2 1634.4,1270.0 1637.6,1270.0C1640.9,1270.0 1644.1,1245.6 1647.4,1243.7C1650.6,1241.8 1653.9,1240.9 1657.1,1240.9C1660.4,1240.9 1663.6,1318.1 1666.9,1318.1C1670.1,1318.1 1673.4,1309.1 1676.6,1299.4C1679.9,1289.8 1683.1,1260.2 1686.4,1260.2C1689.7,1260.2 1692.9,1271.5 1696.2,1276.5C1699.4,1281.5 1702.7,1290.2 1705.9,1290.2C1709.2,1290.2 1712.4,1248.3 1715.7,1248.3C1718.9,1248.3 1722.2,1307.6 1725.4,1307.6C1728.7,1307.6 1731.9,1307.6 1735.2,1307.5C1738.4,1307.5 1741.7,1293.0 1745.0,1287.7C1748.2,1282.3 1751.5,1282.1 1754.7,1275.5C1758.0,1268.9 1761.2,1248.1 1764.5,1248.1C1767.7,1248.1 1771.0,1269.0 1774.2,1276.1C1777.5,1283.2 1780.7,1286.4 1784.0,1290.9C1787.2,1295.3 1790.5,1302.8 1793.8,1302.8C1797.0,1302.8 1800.3,1254.3 1803.5,1254.3C1806.8,1254.3 1810.0,1275.3 1813.3,1276.1C1816.5,1277.0 1819.8,1277.4 1823.0,1277.4C1826.3,1277.4 1829.5,1275.9 1832.8,1273.1C1836.0,1270.3 1839.3,1263.9 1842.5,1260.5C1845.8,1257.2 1849.1,1253.2 1852.3,1253.2C1855.6,1253.2 1858.8,1267.6 1862.1,1267.6C1865.3,1267.6 1868.6,1267.6 1871.8,1267.6C1875.1,1267.6 1878.3,1263.2 1881.6,1260.2C1884.8,1257.1 1888.1,1249.3 1891.3,1249.3C1894.6,1249.3 1897.9,1263.9 1901.1,1269.1C1904.4,1274.4 1907.6,1274.4 1910.9,1281.0C1914.1,1287.5 1917.4,1308.6 1920.6,1308.6C1923.9,1308.6 1927.1,1256.4 1930.4,1256.4C1933.6,1256.4 1936.9,1273.2 1940.1,1273.2C1943.4,1273.2 1946.6,1256.6 1949.9,1256.6C1953.2,1256.6 1956.4,1260.3 1959.7,1262.8C1962.9,1265.4 1966.2,1268.0 1969.4,1271.9C1972.7,1275.8 1975.9,1286.3 1979.2,1286.3C1982.4,1286.3 1985.7,1267.0 1988.9,1267.0C1992.2,1267.0 1995.4,1272.8 1998.7,1277.5C2001.9,1282.2 2005.2,1295.3 2008.5,1295.3C2011.7,1295.3 2015.0,1285.8 2018.2,1278.0C2021.5,1270.1 2024.7,1248.2 2028.0,1248.2C2031.2,1248.2 2034.5,1274.8 2037.7,1274.8C2041.0,1274.8 2044.2,1247.7 2047.5,1247.7C2050.7,1247.7 2054.0,1259.3 2057.3,1261.6C2060.5,1263.8 2063.8,1262.7 2067.0,1264.9C2070.3,1267.1 2073.5,1278.8 2076.8,1278.8C2080.0,1278.8 2083.3,1256.4 2086.5,1252.6C2089.8,1248.8 2093.0,1246.9 2096.3,1246.9C2099.5,1246.9 2102.8,1285.9 2106.0,1285.9C2109.3,1285.9 2112.6,1244.2 2115.8,1244.2C2119.1,1244.2 2122.3,1312.4 2125.6,1312.4C2128.8,1312.4 2132.1,1289.5 2135.3,1280.6C2138.6,1271.7 2141.8,1259.0 2145.1,1259.0C2148.3,1259.0 2151.6,1260.2 2154.8,1262.8C2158.1,1265.3 2161.3,1293.5 2164.6,1293.5C2167.9,1293.5 2171.1,1278.8 2174.4,1278.8C2177.6,1278.8 2180.9,1318.4 2184.1,1318.4C2187.4,1318.4 2190.6,1232.4 2193.9,1232.4C2197.1,1232.4 2200.4,1260.8 2203.6,1267.3C2206.9,1273.8 2210.1,1277.0 2213.4,1277.0C2216.7,1277.0 2219.9,1273.1 2223.2,1273.1C2226.4,1273.1 2229.7,1273.2 2232.9,1273.4C2236.2,1273.6 2239.4,1288.6 2242.7,1288.6C2245.9,1288.6 2249.2,1282.0 2252.4,1282.0C2255.7,1282.0 2258.9,1291.9 2262.2,1291.9C2265.4,1291.9 2268.7,1256.4 2272.0,1256.4C2275.2,1256.4 2278.5,1283.2 2281.7,1286.1C2285.0,1289.0 2288.2,1290.5 2291.5,1290.5C2294.7,1290.5 2298.0,1288.4 2301.2,1284.2C2304.5,1279.9 2307.7,1240.9 2311.0,1240.9C2314.2,1240.9 2317.5,1303.4 2320.7,1303.4C2324.0,1303.4 2327.3,1278.1 2330.5,1270.8C2333.8,1263.5 2337.0,1259.5 2340.3,1259.5C2343.5,1259.5 2346.8,1262.7 2350.0,1262.7C2353.3,1262.7 2356.5,1218.6 2359.8,1218.6C2363.0,1218.6 2366.3,1237.5 2369.5,1251.0C2372.8,1264.4 2376.1,1299.1 2379.3,1299.1C2382.6,1299.1 2385.8,1279.5 2389.1,1270.5C2392.3,1261.5 2395.6,1245.0 2398.8,1245.0C2402.1,1245.0 2405.3,1278.1 2408.6,1278.1C2411.8,1278.1 2415.1,1267.1 2418.3,1267.1C2421.6,1267.1 2424.8,1274.8 2428.1,1280.2C2431.4,1285.7 2434.6,1299.7 2437.9,1299.7C2441.1,1299.7 2444.4,1261.6 2447.6,1261.2C2450.9,1260.7 2454.1,1260.9 2457.4,1260.5C2460.6,1260.0 2463.9,1251.2 2467.1,1251.2C2470.4,1251.2 2473.6,1253.4 2476.9,1257.7C2480.1,1261.9 2483.4,1286.2 2486.7,1286.2C2489.9,1286.2 2493.2,1261.8 2496.4,1261.8C2499.7,1261.8 2502.9,1263.0 2506.2,1265.2C2509.4,1267.4 2512.7,1308.7 2515.9,1308.7C2519.2,1308.7 2522.4,1272.6 2525.7,1272.6C2528.9,1272.6 2532.2,1293.5 2535.5,1293.5C2538.7,1293.5 2542.0,1287.1 2545.2,1287.1C2548.5,1287.1 2551.7,1302.6 2555.0,1302.6C2558.2,1302.6 2561.5,1231.9 2564.7,1231.9C2568.0,1231.9 2571.2,1244.0 2574.5,1256.6C2577.7,1269.2 2581.0,1307.5 2584.2,1307.5C2587.5,1307.5 2590.8,1304.4 2594.0,1298.1C2597.3,1291.9 2600.5,1264.4 2603.8,1264.4C2607.0,1264.4 2610.3,1282.8 2613.5,1282.8C2616.8,1282.8 2620.0,1264.5 2623.3,1264.5C2626.5,1264.5 2629.8,1270.7 2633.0,1273.7C2636.3,1276.6 2639.5,1278.8 2642.8,1282.1C2646.1,1285.5 2649.3,1293.6 2652.6,1293.6C2655.8,1293.6 2659.1,1292.9 2662.3,1291.4C2665.6,1290.0 2668.8,1241.8 2672.1,1241.8C2675.3,1241.8 2678.6,1280.8 2681.8,1280.8C2685.1,1280.8 2688.3,1273.4 2691.6,1269.1C2694.9,1264.9 2698.1,1255.3 2701.4,1255.3C2704.6,1255.3 2707.9,1256.4 2711.1,1258.4C2714.4,1260.3 2717.6,1267.1 2720.9,1267.1C2724.1,1267.1 2727.4,1237.4 2730.6,1237.4C2733.9,1237.4 2737.1,1302.7 2740.4,1302.7C2743.6,1302.7 2746.9,1233.8 2750.2,1233.8C2753.4,1233.8 2756.7,1289.9 2759.9,1289.9C2763.2,1289.9 2766.4,1269.4 2769.7,1266.5C2772.9,1263.6 2776.2,1262.2 2779.4,1262.2C2782.7,1262.2 2785.9,1282.5 2789.2,1289.8C2792.4,1297.1 2795.7,1305.8 2798.9,1305.8C2802.2,1305.8 2805.5,1257.1 2808.7,1257.1C2812.0,1257.1 2815.2,1263.7 2818.5,1272.4C2821.7,1281.1 2825.0,1309.4 2828.2,1309.4C2831.5,1309.4 2834.7,1263.7 2838.0,1263.7C2841.2,1263.7 2844.5,1272.6 2847.7,1274.0C2851.0,1275.3 2854.3,1274.7 2857.5,1276.0C2860.8,1277.4 2864.0,1284.1 2867.3,1284.1C2870.5,1284.1 2873.8,1249.9 2877.0,1249.9C2880.3,1249.9 2883.5,1305.7 2886.8,1305.7C2890.0,1305.7 2893.3,1304.4 2896.5,1301.9C2899.8,1299.3 2903.0,1275.7 2906.3,1252.2" fill="none" stroke="#3b82f6" stroke-width="2" stroke-dasharray="6 6"/><path d="M730.0,1216.0C733.3,1216.4 736.5,1216.7 739.8,1218.1C743.0,1219.5 746.3,1275.5 749.5,1275.5C752.8,1275.5 756.0,1235.2 759.3,1235.2C762.5,1235.2 765.8,1280.0 769.0,1280.0C772.3,1280.0 775.5,1266.3 778.8,1258.8C782.0,1251.3 785.3,1236.8 788.6,1235.0C791.8,1233.2 795.1,1232.9 798.3,1232.3C801.6,1231.7 804.8,1232.0 808.1,1231.3C811.3,1230.6 814.6,1218.9 817.8,1218.9C821.1,1218.9 824.3,1242.8 827.6,1242.8C830.8,1242.8 834.1,1238.2 837.4,1238.2C840.6,1238.2 843.9,1246.4 847.1,1246.4C850.4,1246.4 853.6,1229.3 856.9,1229.3C860.1,1229.3 863.4,1229.7 866.6,1230.3C869.9,1231.0 873.1,1267.0 876.4,1267.0C879.6,1267.0 882.9,1239.1 886.1,1238.5C889.4,1237.8 892.7,1238.2 895.9,1237.5C899.2,1236.9 902.4,1224.9 905.7,1224.9C908.9,1224.9 912.2,1270.8 915.4,1270.8C918.7,1270.8 921.9,1218.5 925.2,1218.5C928.4,1218.5 931.7,1252.2 934.9,1252.2C938.2,1252.2 941.4,1238.1 944.7,1238.1C948.0,1238.1 951.2,1238.7 954.5,1240.1C957.7,1241.4 961.0,1247.5 964.2,1247.5C967.5,1247.5 970.7,1229.6 974.0,1229.6C977.2,1229.6 980.5,1241.7 983.7,1241.7C987.0,1241.7 990.2,1206.5 993.5,1206.5C996.8,1206.5 1000.0,1220.5 1003.3,1224.8C1006.5,1229.0 1009.8,1229.9 1013.0,1232.0C1016.3,1234.1 1019.5,1235.6 1022.8,1237.2C1026.0,1238.9 1029.3,1240.4 1032.5,1242.1C1035.8,1243.8 1039.0,1246.0 1042.3,1247.4C1045.5,1248.8 1048.8,1248.4 1052.1,1250.5C1055.3,1252.6 1058.6,1259.9 1061.8,1259.9C1065.1,1259.9 1068.3,1230.6 1071.6,1230.6C1074.8,1230.6 1078.1,1261.9 1081.3,1263.5C1084.6,1265.1 1087.8,1265.9 1091.1,1265.9C1094.3,1265.9 1097.6,1255.4 1100.8,1248.0C1104.1,1240.6 1107.4,1221.5 1110.6,1221.5C1113.9,1221.5 1117.1,1253.7 1120.4,1253.7C1123.6,1253.7 1126.9,1245.5 1130.1,1237.9C1133.4,1230.3 1136.6,1208.3 1139.9,1208.3C1143.1,1208.3 1146.4,1254.2 1149.6,1254.8C1152.9,1255.4 1156.2,1255.7 1159.4,1255.7C1162.7,1255.7 1165.9,1240.9 1169.2,1240.9C1172.4,1240.9 1175.7,1266.4 1178.9,1266.4C1182.2,1266.4 1185.4,1224.0 1188.7,1224.0C1191.9,1224.0 1195.2,1242.2 1198.4,1250.3C1201.7,1258.3 1204.9,1272.3 1208.2,1272.3C1211.5,1272.3 1214.7,1207.5 1218.0,1207.5C1221.2,1207.5 1224.5,1269.4 1227.7,1269.4C1231.0,1269.4 1234.2,1206.0 1237.5,1206.0C1240.7,1206.0 1244.0,1208.8 1247.2,1214.3C1250.5,1219.9 1253.7,1257.3 1257.0,1263.5C1260.2,1269.8 1263.5,1272.9 1266.8,1272.9C1270.0,1272.9 1273.3,1239.2 1276.5,1228.0C1279.8,1216.9 1283.0,1206.0 1286.3,1206.0C1289.5,1206.0 1292.8,1250.1 1296.0,1263.6C1299.3,1277.0 1302.5,1286.9 1305.8,1286.9C1309.0,1286.9 1312.3,1249.8 1315.6,1247.4C1318.8,1244.9 1322.1,1243.7 1325.3,1243.7C1328.6,1243.7 1331.8,1266.8 1335.1,1266.8C1338.3,1266.8 1341.6,1242.8 1344.8,1239.9C1348.1,1237.0 1351.3,1235.5 1354.6,1235.5C1357.8,1235.5 1361.1,1257.0 1364.3,1257.0C1367.6,1257.0 1370.9,1243.8 1374.1,1239.4C1377.4,1235.0 1380.6,1230.5 1383.9,1230.5C1387.1,1230.5 1390.4,1235.2 1393.6,1240.2C1396.9,1245.2 1400.1,1255.1 1403.4,1260.7C1406.6,1266.2 1409.9,1273.5 1413.1,1273.5C1416.4,1273.5 1419.6,1215.1 1422.9,1215.1C1426.2,1215.1 1429.4,1231.3 1432.7,1236.3C1435.9,1241.3 1439.2,1245.2 1442.4,1245.2C1445.7,1245.2 1448.9,1206.0 1452.2,1206.0C1455.4,1206.0 1458.7,1285.4 1461.9,1285.4C1465.2,1285.4 1468.4,1223.7 1471.7,1223.7C1475.0,1223.7 1478.2,1223.8 1481.5,1224.1C1484.7,1224.3 1488.0,1254.6 1491.2,1254.6C1494.5,1254.6 1497.7,1218.8 1501.0,1218.8C1504.2,1218.8 1507.5,1229.2 1510.7,1236.1C1514.0,1242.9 1517.2,1260.0 1520.5,1260.0C1523.7,1260.0 1527.0,1248.1 1530.3,1248.1C1533.5,1248.1 1536.8,1248.9 1540.0,1248.9C1543.3,1248.9 1546.5,1221.2 1549.8,1221.2C1553.0,1221.2 1556.3,1255.6 1559.5,1255.6C1562.8,1255.6 1566.0,1241.4 1569.3,1241.4C1572.5,1241.4 1575.8,1275.7 1579.0,1275.7C1582.3,1275.7 1585.6,1226.3 1588.8,1226.3C1592.1,1226.3 1595.3,1262.9 1598.6,1262.9C1601.8,1262.9 1605.1,1234.8 1608.3,1234.8C1611.6,1234.8 1614.8,1277.8 1618.1,1277.8C1621.3,1277.8 1624.6,1233.0 1627.8,1233.0C1631.1,1233.0 1634.4,1267.5 1637.6,1267.5C1640.9,1267.5 1644.1,1227.4 1647.4,1227.4C1650.6,1227.4 1653.9,1259.7 1657.1,1259.7C1660.4,1259.7 1663.6,1246.2 1666.9,1246.2C1670.1,1246.2 1673.4,1253.8 1676.6,1253.8C1679.9,1253.8 1683.1,1227.6 1686.4,1227.6C1689.7,1227.6 1692.9,1234.1 1696.2,1234.1C1699.4,1234.1 1702.7,1212.9 1705.9,1212.9C1709.2,1212.9 1712.4,1214.6 1715.7,1218.1C1718.9,1221.6 1722.2,1245.6 1725.4,1249.0C1728.7,1252.4 1731.9,1254.1 1735.2,1254.1C1738.4,1254.1 1741.7,1229.0 1745.0,1229.0C1748.2,1229.0 1751.5,1253.0 1754.7,1253.0C1758.0,1253.0 1761.2,1240.1 1764.5,1240.1C1767.7,1240.1 1771.0,1268.5 1774.2,1268.5C1777.5,1268.5 1780.7,1209.7 1784.0,1209.7C1787.2,1209.7 1790.5,1256.3 1793.8,1256.3C1797.0,1256.3 1800.3,1227.0 1803.5,1227.0C1806.8,1227.0 1810.0,1238.5 1813.3,1238.5C1816.5,1238.5 1819.8,1220.3 1823.0,1214.9C1826.3,1209.5 1829.5,1206.0 1832.8,1206.0C1836.0,1206.0 1839.3,1234.6 1842.5,1244.8C1845.8,1254.9 1849.1,1266.8 1852.3,1266.8C1855.6,1266.8 1858.8,1254.2 1862.1,1248.8C1865.3,1243.5 1868.6,1234.5 1871.8,1234.5C1875.1,1234.5 1878.3,1283.8 1881.6,1283.8C1884.8,1283.8 1888.1,1250.1 1891.3,1250.1C1894.6,1250.1 1897.9,1255.9 1901.1,1257.1C1904.4,1258.2 1907.6,1257.8 1910.9,1258.8C1914.1,1259.8 1917.4,1260.3 1920.6,1263.2C1923.9,1266.1 1927.1,1282.0 1930.4,1282.0C1933.6,1282.0 1936.9,1213.1 1940.1,1213.1C1943.4,1213.1 1946.6,1258.1 1949.9,1258.1C1953.2,1258.1 1956.4,1227.5 1959.7,1227.5C1962.9,1227.5 1966.2,1272.4 1969.4,1272.4C1972.7,1272.4 1975.9,1210.7 1979.2,1210.7C1982.4,1210.7 1985.7,1230.0 1988.9,1239.8C1992.2,1249.6 1995.4,1269.3 1998.7,1269.3C2001.9,1269.3 2005.2,1254.4 2008.5,1247.4C2011.7,1240.3 2015.0,1227.0 2018.2,1227.0C2021.5,1227.0 2024.7,1265.4 2028.0,1265.4C2031.2,1265.4 2034.5,1256.2 2037.7,1252.5C2041.0,1248.8 2044.2,1243.3 2047.5,1243.3C2050.7,1243.3 2054.0,1264.7 2057.3,1264.7C2060.5,1264.7 2063.8,1206.0 2067.0,1206.0C2070.3,1206.0 2073.5,1255.3 2076.8,1255.3C2080.0,1255.3 2083.3,1251.5 2086.5,1246.2C2089.8,1240.9 2093.0,1223.6 2096.3,1223.6C2099.5,1223.6 2102.8,1224.8 2106.0,1227.3C2109.3,1229.7 2112.6,1246.6 2115.8,1246.6C2119.1,1246.6 2122.3,1246.2 2125.6,1246.2C2128.8,1246.2 2132.1,1247.6 2135.3,1247.6C2138.6,1247.6 2141.8,1219.4 2145.1,1219.4C2148.3,1219.4 2151.6,1260.0 2154.8,1260.7C2158.1,1261.4 2161.3,1261.7 2164.6,1261.7C2167.9,1261.7 2171.1,1219.4 2174.4,1219.4C2177.6,1219.4 2180.9,1243.1 2184.1,1253.8C2187.4,1264.4 2190.6,1283.4 2193.9,1283.4C2197.1,1283.4 2200.4,1223.8 2203.6,1223.8C2206.9,1223.8 2210.1,1224.9 2213.4,1227.2C2216.7,1229.5 2219.9,1278.7 2223.2,1278.7C2226.4,1278.7 2229.7,1263.2 2232.9,1254.4C2236.2,1245.6 2239.4,1230.8 2242.7,1225.7C2245.9,1220.6 2249.2,1218.1 2252.4,1218.1C2255.7,1218.1 2258.9,1278.9 2262.2,1278.9C2265.4,1278.9 2268.7,1230.8 2272.0,1230.8C2275.2,1230.8 2278.5,1241.5 2281.7,1246.4C2285.0,1251.4 2288.2,1260.4 2291.5,1260.4C2294.7,1260.4 2298.0,1237.9 2301.2,1237.9C2304.5,1237.9 2307.7,1252.6 2311.0,1256.9C2314.2,1261.1 2317.5,1263.5 2320.7,1263.5C2324.0,1263.5 2327.3,1254.7 2330.5,1252.1C2333.8,1249.4 2337.0,1250.5 2340.3,1247.5C2343.5,1244.4 2346.8,1206.0 2350.0,1206.0C2353.3,1206.0 2356.5,1255.6 2359.8,1255.6C2363.0,1255.6 2366.3,1225.4 2369.5,1225.4C2372.8,1225.4 2376.1,1266.6 2379.3,1266.6C2382.6,1266.6 2385.8,1224.4 2389.1,1224.4C2392.3,1224.4 2395.6,1236.4 2398.8,1236.4C2402.1,1236.4 2405.3,1234.0 2408.6,1234.0C2411.8,1234.0 2415.1,1234.0 2418.3,1234.0C2421.6,1234.0 2424.8,1273.5 2428.1,1273.5C2431.4,1273.5 2434.6,1271.9 2437.9,1269.3C2441.1,1266.6 2444.4,1261.9 2447.6,1257.5C2450.9,1253.0 2454.1,1242.5 2457.4,1242.5C2460.6,1242.5 2463.9,1254.4 2467.1,1254.4C2470.4,1254.4 2473.6,1225.0 2476.9,1225.0C2480.1,1225.0 2483.4,1230.3 2486.7,1230.3C2489.9,1230.3 2493.2,1228.2 2496.4,1228.2C2499.7,1228.2 2502.9,1238.3 2506.2,1238.3C2509.4,1238.3 2512.7,1226.5 2515.9,1226.5C2519.2,1226.5 2522.4,1240.9 2525.7,1241.3C2528.9,1241.6 2532.2,1241.7 2535.5,1241.7C2538.7,1241.7 2542.0,1222.7 2545.2,1222.7C2548.5,1222.7 2551.7,1271.4 2555.0,1271.4C2558.2,1271.4 2561.5,1268.9 2564.7,1263.9C2568.0,1258.8 2571.2,1240.9 2574.5,1238.8C2577.7,1236.7 2581.0,1235.6 2584.2,1235.6C2587.5,1235.6 2590.8,1252.0 2594.0,1252.0C2597.3,1252.0 2600.5,1245.7 2603.8,1242.1C2607.0,1238.4 2610.3,1230.0 2613.5,1230.0C2616.8,1230.0 2620.0,1252.6 2623.3,1252.6C2626.5,1252.6 2629.8,1251.7 2633.0,1250.1C2636.3,1248.4 2639.5,1228.6 2642.8,1228.6C2646.1,1228.6 2649.3,1240.4 2652.6,1240.4C2655.8,1240.4 2659.1,1227.1 2662.3,1227.1C2665.6,1227.1 2668.8,1268.6 2672.1,1268.6C2675.3,1268.6 2678.6,1257.8 2681.8,1251.3C2685.1,1244.9 2688.3,1233.7 2691.6,1229.8C2694.9,1225.8 2698.1,1223.9 2701.4,1223.9C2704.6,1223.9 2707.9,1292.9 2711.1,1292.9C2714.4,1292.9 2717.6,1254.4 2720.9,1246.8C2724.1,1239.2 2727.4,1235.4 2730.6,1235.4C2733.9,1235.4 2737.1,1240.3 2740.4,1240.3C2743.6,1240.3 2746.9,1228.5 2750.2,1228.5C2753.4,1228.5 2756.7,1232.2 2759.9,1239.4C2763.2,1246.7 2766.4,1292.9 2769.7,1292.9C2772.9,1292.9 2776.2,1230.0 2779.4,1230.0C2782.7,1230.0 2785.9,1243.5 2789.2,1248.0C2792.4,1252.5 2795.7,1255.1 2798.9,1256.9C2802.2,1258.7 2805.5,1259.6 2808.7,1259.6C2812.0,1259.6 2815.2,1234.3 2818.5,1231.0C2821.7,1227.7 2825.0,1226.1 2828.2,1226.1C2831.5,1226.1 2834.7,1260.6 2838.0,1260.6C2841.2,1260.6 2844.5,1259.6 2847.7,1257.5C2851.0,1255.5 2854.3,1244.7 2857.5,1237.6C2860.8,1230.5 2864.0,1215.1 2867.3,1215.1C2870.5,1215.1 2873.8,1239.7 2877.0,1239.7C2880.3,1239.7 2883.5,1235.1 2886.8,1235.1C2890.0,1235.1 2893.3,1260.0 2896.5,1260.0C2899.8,1260.0 2903.0,1257.8 2906.3,1255.7" fill="none" stroke="#10b981" stroke-width="2" stroke-dasharray="6 6"/><path d="M730.0,1350.0C733.3,1335.4 736.5,1320.7 739.8,1320.7C743.0,1320.7 746.3,1398.4 749.5,1398.4C752.8,1398.4 756.0,1390.5 759.3,1390.5C762.5,1390.5 765.8,1450.2 769.0,1450.2C772.3,1450.2 775.5,1357.9 778.8,1357.9C782.0,1357.9 785.3,1406.3 788.6,1406.3C791.8,1406.3 795.1,1330.9 798.3,1330.9C801.6,1330.9 804.8,1363.1 808.1,1364.6C811.3,1366.1 814.6,1366.9 817.8,1366.9C821.1,1366.9 824.3,1332.0 827.6,1332.0C830.8,1332.0 834.1,1392.8 837.4,1392.8C840.6,1392.8 843.9,1342.1 847.1,1342.1C850.4,1342.1 853.6,1407.4 856.9,1407.4C860.1,1407.4 863.4,1316.2 866.6,1316.2C869.9,1316.2 873.1,1440.1 876.4,1440.1C879.6,1440.1 882.9,1384.9 886.1,1357.3C889.4,1329.7 892.7,1274.6 895.9,1274.6C899.2,1274.6 902.4,1324.9 905.7,1350.0C908.9,1375.2 912.2,1425.4 915.4,1425.4C918.7,1425.4 921.9,1334.2 925.2,1334.2C928.4,1334.2 931.7,1436.7 934.9,1436.7C938.2,1436.7 941.4,1351.1 944.7,1351.1C948.0,1351.1 951.2,1387.9 954.5,1389.4C957.7,1390.9 961.0,1391.7 964.2,1391.7C967.5,1391.7 970.7,1299.3 974.0,1299.3C977.2,1299.3 980.5,1443.5 983.7,1443.5C987.0,1443.5 990.2,1399.2 993.5,1377.0C996.8,1354.9 1000.0,1310.6 1003.3,1310.6C1006.5,1310.6 1009.8,1398.4 1013.0,1398.4C1016.3,1398.4 1019.5,1328.6 1022.8,1328.6C1026.0,1328.6 1029.3,1423.2 1032.5,1423.2C1035.8,1423.2 1039.0,1342.1 1042.3,1342.1C1045.5,1342.1 1048.8,1434.4 1052.1,1434.4C1055.3,1434.4 1058.6,1310.6 1061.8,1310.6C1065.1,1310.6 1068.3,1354.9 1071.6,1377.0C1074.8,1399.2 1078.1,1443.5 1081.3,1443.5C1084.6,1443.5 1087.8,1312.9 1091.1,1312.9C1094.3,1312.9 1097.6,1364.6 1100.8,1364.6C1104.1,1364.6 1107.4,1342.5 1110.6,1338.7C1113.9,1335.0 1117.1,1333.1 1120.4,1333.1C1123.6,1333.1 1126.9,1420.9 1130.1,1420.9C1133.4,1420.9 1136.6,1306.1 1139.9,1306.1C1143.1,1306.1 1146.4,1357.5 1149.6,1383.2C1152.9,1408.9 1156.2,1460.3 1159.4,1460.3C1162.7,1460.3 1165.9,1344.4 1169.2,1344.4C1172.4,1344.4 1175.7,1428.8 1178.9,1428.8C1182.2,1428.8 1185.4,1329.7 1188.7,1329.7C1191.9,1329.7 1195.2,1335.0 1198.4,1345.5C1201.7,1356.0 1204.9,1401.8 1208.2,1401.8C1211.5,1401.8 1214.7,1281.3 1218.0,1281.3C1221.2,1281.3 1224.5,1431.1 1227.7,1431.1C1231.0,1431.1 1234.2,1389.0 1237.5,1368.0C1240.7,1347.0 1244.0,1305.0 1247.2,1305.0C1250.5,1305.0 1253.7,1464.8 1257.0,1464.8C1260.2,1464.8 1263.5,1366.9 1266.8,1366.9C1270.0,1366.9 1273.3,1400.7 1276.5,1400.7C1279.8,1400.7 1283.0,1386.8 1286.3,1379.8C1289.5,1372.9 1292.8,1359.0 1296.0,1359.0C1299.3,1359.0 1302.5,1452.2 1305.8,1452.2C1309.0,1452.2 1312.3,1365.6 1315.6,1365.6C1318.8,1365.6 1322.1,1398.5 1325.3,1403.8C1328.6,1409.0 1331.8,1411.7 1335.1,1411.7C1338.3,1411.7 1341.6,1311.6 1344.8,1311.6C1348.1,1311.6 1351.3,1455.5 1354.6,1455.5C1357.8,1455.5 1361.1,1403.2 1364.3,1386.9C1367.6,1370.6 1370.9,1369.9 1374.1,1357.7C1377.4,1345.5 1380.6,1313.8 1383.9,1313.8C1387.1,1313.8 1390.4,1318.7 1393.6,1328.4C1396.9,1338.2 1400.1,1435.3 1403.4,1435.3C1406.6,1435.3 1409.9,1396.7 1413.1,1380.2C1416.4,1363.7 1419.6,1336.3 1422.9,1336.3C1426.2,1336.3 1429.4,1344.8 1432.7,1353.2C1435.9,1361.6 1439.2,1386.9 1442.4,1386.9C1445.7,1386.9 1448.9,1288.0 1452.2,1288.0C1455.4,1288.0 1458.7,1407.2 1461.9,1407.2C1465.2,1407.2 1468.4,1396.1 1471.7,1380.2C1475.0,1364.2 1478.2,1311.6 1481.5,1311.6C1484.7,1311.6 1488.0,1320.2 1491.2,1337.4C1494.5,1354.7 1497.7,1427.4 1501.0,1427.4C1504.2,1427.4 1507.5,1328.4 1510.7,1328.4C1514.0,1328.4 1517.2,1425.2 1520.5,1425.2C1523.7,1425.2 1527.0,1419.2 1530.3,1407.2C1533.5,1395.2 1536.8,1354.5 1540.0,1337.4C1543.3,1320.4 1546.5,1304.8 1549.8,1304.8C1553.0,1304.8 1556.3,1451.0 1559.5,1451.0C1562.8,1451.0 1566.0,1355.4 1569.3,1355.4C1572.5,1355.4 1575.8,1383.6 1579.0,1383.6C1582.3,1383.6 1585.6,1284.6 1588.8,1284.6C1592.1,1284.6 1595.3,1427.4 1598.6,1427.4C1601.8,1427.4 1605.1,1356.6 1608.3,1356.6C1611.6,1356.6 1614.8,1439.8 1618.1,1439.8C1621.3,1439.8 1624.6,1317.2 1627.8,1317.2C1631.1,1317.2 1634.4,1422.9 1637.6,1422.9C1640.9,1422.9 1644.1,1329.6 1647.4,1329.6C1650.6,1329.6 1653.9,1356.4 1657.1,1377.9C1660.4,1399.5 1663.6,1458.9 1666.9,1458.9C1670.1,1458.9 1673.4,1428.7 1676.6,1404.9C1679.9,1381.1 1683.1,1316.1 1686.4,1316.1C1689.7,1316.1 1692.9,1348.7 1696.2,1348.7C1699.4,1348.7 1702.7,1344.9 1705.9,1337.4C1709.2,1329.9 1712.4,1303.7 1715.7,1303.7C1718.9,1303.7 1722.2,1381.5 1725.4,1404.9C1728.7,1428.4 1731.9,1444.3 1735.2,1444.3C1738.4,1444.3 1741.7,1368.9 1745.0,1368.9C1748.2,1368.9 1751.5,1394.8 1754.7,1394.8C1758.0,1394.8 1761.2,1317.2 1764.5,1317.2C1767.7,1317.2 1771.0,1449.9 1774.2,1449.9C1777.5,1449.9 1780.7,1340.8 1784.0,1340.8C1787.2,1340.8 1790.5,1415.0 1793.8,1415.0C1797.0,1415.0 1800.3,1308.2 1803.5,1308.2C1806.8,1308.2 1810.0,1425.2 1813.3,1425.2C1816.5,1425.2 1819.8,1378.3 1823.0,1354.9C1826.3,1331.4 1829.5,1284.6 1832.8,1284.6C1836.0,1284.6 1839.3,1428.5 1842.5,1428.5C1845.8,1428.5 1849.1,1383.2 1852.3,1373.4C1855.6,1363.7 1858.8,1363.7 1862.1,1358.8C1865.3,1353.9 1868.6,1344.2 1871.8,1344.2C1875.1,1344.2 1878.3,1436.4 1881.6,1436.4C1884.8,1436.4 1888.1,1381.3 1891.3,1381.3C1894.6,1381.3 1897.9,1391.4 1901.1,1391.4C1904.4,1391.4 1907.6,1348.7 1910.9,1348.7C1914.1,1348.7 1917.4,1466.8 1920.6,1466.8C1923.9,1466.8 1927.1,1410.2 1930.4,1381.9C1933.6,1353.6 1936.9,1297.0 1940.1,1297.0C1943.4,1297.0 1946.6,1374.6 1949.9,1374.6C1953.2,1374.6 1956.4,1328.4 1959.7,1328.4C1962.9,1328.4 1966.2,1440.9 1969.4,1440.9C1972.7,1440.9 1975.9,1307.1 1979.2,1307.1C1982.4,1307.1 1985.7,1340.6 1988.9,1357.3C1992.2,1374.1 1995.4,1390.8 1998.7,1407.5C2001.9,1424.3 2005.2,1457.8 2008.5,1457.8C2011.7,1457.8 2015.0,1354.3 2018.2,1354.3C2021.5,1354.3 2024.7,1385.1 2028.0,1400.4C2031.2,1415.8 2034.5,1446.5 2037.7,1446.5C2041.0,1446.5 2044.2,1274.5 2047.5,1274.5C2050.7,1274.5 2054.0,1409.4 2057.3,1409.4C2060.5,1409.4 2063.8,1335.2 2067.0,1335.2C2070.3,1335.2 2073.5,1430.8 2076.8,1430.8C2080.0,1430.8 2083.3,1390.3 2086.5,1370.1C2089.8,1349.8 2093.0,1309.3 2096.3,1309.3C2099.5,1309.3 2102.8,1415.0 2106.0,1415.0C2109.3,1415.0 2112.6,1308.2 2115.8,1308.2C2119.1,1308.2 2122.3,1427.4 2125.6,1427.4C2128.8,1427.4 2132.1,1380.2 2135.3,1356.6C2138.6,1332.9 2141.8,1285.7 2145.1,1285.7C2148.3,1285.7 2151.6,1343.8 2154.8,1372.9C2158.1,1401.9 2161.3,1460.0 2164.6,1460.0C2167.9,1460.0 2171.1,1349.8 2174.4,1349.8C2177.6,1349.8 2180.9,1464.5 2184.1,1464.5C2187.4,1464.5 2190.6,1358.8 2193.9,1358.8C2197.1,1358.8 2200.4,1359.9 2203.6,1359.9C2206.9,1359.9 2210.1,1335.2 2213.4,1335.2C2216.7,1335.2 2219.9,1438.7 2223.2,1438.7C2226.4,1438.7 2229.7,1387.7 2232.9,1377.9C2236.2,1368.2 2239.4,1363.3 2242.7,1363.3C2245.9,1363.3 2249.2,1363.7 2252.4,1364.4C2255.7,1365.2 2258.9,1460.0 2262.2,1460.0C2265.4,1460.0 2268.7,1303.7 2272.0,1303.7C2275.2,1303.7 2278.5,1331.1 2281.7,1344.8C2285.0,1358.4 2288.2,1385.8 2291.5,1385.8C2294.7,1385.8 2298.0,1336.3 2301.2,1336.3C2304.5,1336.3 2307.7,1372.1 2311.0,1389.9C2314.2,1407.8 2317.5,1443.5 2320.7,1443.5C2324.0,1443.5 2327.3,1409.3 2330.5,1392.2C2333.8,1375.1 2337.0,1358.0 2340.3,1340.9C2343.5,1323.7 2346.8,1289.5 2350.0,1289.5C2353.3,1289.5 2356.5,1320.8 2359.8,1320.8C2363.0,1320.8 2366.3,1288.3 2369.5,1288.3C2372.8,1288.3 2376.1,1437.5 2379.3,1437.5C2382.6,1437.5 2385.8,1397.0 2389.1,1376.8C2392.3,1356.5 2395.6,1316.0 2398.8,1316.0C2402.1,1316.0 2405.3,1338.4 2408.6,1346.1C2411.8,1353.7 2415.1,1356.5 2418.3,1361.7C2421.6,1366.9 2424.8,1366.9 2428.1,1377.4C2431.4,1387.8 2434.6,1442.3 2437.9,1442.3C2441.1,1442.3 2444.4,1417.9 2447.6,1405.6C2450.9,1393.4 2454.1,1368.9 2457.4,1368.9C2460.6,1368.9 2463.9,1376.1 2467.1,1376.1C2470.4,1376.1 2473.6,1311.2 2476.9,1311.2C2480.1,1311.2 2483.4,1397.8 2486.7,1397.8C2489.9,1397.8 2493.2,1366.5 2496.4,1350.9C2499.7,1335.2 2502.9,1303.9 2506.2,1303.9C2509.4,1303.9 2512.7,1438.7 2515.9,1438.7C2519.2,1438.7 2522.4,1366.5 2525.7,1366.5C2528.9,1366.5 2532.2,1417.1 2535.5,1417.1C2538.7,1417.1 2542.0,1290.7 2545.2,1290.7C2548.5,1290.7 2551.7,1425.5 2555.0,1425.5C2558.2,1425.5 2561.5,1313.6 2564.7,1311.2C2568.0,1308.8 2571.2,1307.6 2574.5,1307.6C2577.7,1307.6 2581.0,1413.5 2584.2,1413.5C2587.5,1413.5 2590.8,1390.6 2594.0,1379.2C2597.3,1367.7 2600.5,1344.9 2603.8,1344.9C2607.0,1344.9 2610.3,1361.7 2613.5,1361.7C2616.8,1361.7 2620.0,1350.9 2623.3,1350.9C2626.5,1350.9 2629.8,1424.3 2633.0,1424.3C2636.3,1424.3 2639.5,1389.8 2642.8,1372.5C2646.1,1355.3 2649.3,1320.8 2652.6,1320.8C2655.8,1320.8 2659.1,1427.9 2662.3,1427.9C2665.6,1427.9 2668.8,1354.5 2672.1,1354.5C2675.3,1354.5 2678.6,1378.6 2681.8,1378.6C2685.1,1378.6 2688.3,1356.1 2691.6,1344.9C2694.9,1333.6 2698.1,1311.2 2701.4,1311.2C2704.6,1311.2 2707.9,1449.6 2711.1,1449.6C2714.4,1449.6 2717.6,1397.8 2720.9,1371.9C2724.1,1346.1 2727.4,1294.3 2730.6,1294.3C2733.9,1294.3 2737.1,1449.6 2740.4,1449.6C2743.6,1449.6 2746.9,1297.9 2750.2,1297.9C2753.4,1297.9 2756.7,1349.3 2759.9,1374.9C2763.2,1400.6 2766.4,1452.0 2769.7,1452.0C2772.9,1452.0 2776.2,1329.2 2779.4,1329.2C2782.7,1329.2 2785.9,1372.1 2789.2,1393.6C2792.4,1415.1 2795.7,1458.0 2798.9,1458.0C2802.2,1458.0 2805.5,1404.6 2808.7,1378.0C2812.0,1351.3 2815.2,1297.9 2818.5,1297.9C2821.7,1297.9 2825.0,1423.1 2828.2,1423.1C2831.5,1423.1 2834.7,1389.4 2838.0,1389.4C2841.2,1389.4 2844.5,1433.9 2847.7,1433.9C2851.0,1433.9 2854.3,1405.6 2857.5,1391.4C2860.8,1377.2 2864.0,1363.0 2867.3,1348.9C2870.5,1334.7 2873.8,1306.4 2877.0,1306.4C2880.3,1306.4 2883.5,1423.1 2886.8,1423.1C2890.0,1423.1 2893.3,1422.3 2896.5,1420.7C2899.8,1419.1 2903.0,1386.2 2906.3,1353.3" fill="none" stroke="#8b5cf6" stroke-width="4.4" stroke-linejoin="round"/><line x1="730" y1="1205" x2="730" y2="1560" stroke="#4d5866" stroke-width="2"/><line x1="718" y1="1206.0" x2="730" y2="1206.0" stroke="#4d5866" stroke-width="2"/><line x1="718" y1="1333.8" x2="730" y2="1333.8" stroke="#4d5866" stroke-width="2"/><line x1="718" y1="1461.5" x2="730" y2="1461.5" stroke="#4d5866" stroke-width="2"/></svg>
<div class="t" style="left:100.80px;top:21.10px;font-size:28px;line-height:28px;color:#e5e9f0;font-weight:700;letter-spacing:0.558px;">Frostbyte Pro</div>
<div class="t" style="left:100.80px;top:56.68px;font-size:24px;line-height:24px;color:#858e9a;font-weight:400;letter-spacing:0.737px;">Inventory Management</div>
<div class="t" style="left:21.90px;top:206.47px;font-size:20px;line-height:20px;color:#78828e;font-weight:400;letter-spacing:1.560px;">ORDERS</div>
<div class="t" style="left:69.30px;top:266.60px;font-size:28px;line-height:28px;color:#e2e8f0;font-weight:400;letter-spacing:0.600px;">Purchasing</div>
<div class="t" style="left:69.30px;top:338.30px;font-size:28px;line-height:28px;color:#e2e8f0;font-weight:400;letter-spacing:0.417px;">Reorder Suggestions</div>
<div class="t" style="left:70.30px;top:409.80px;font-size:28px;line-height:28px;color:#e2e8f0;font-weight:400;letter-spacing:-0.200px;">Sales</div>
<div class="t" style="left:21.40px;top:526.37px;font-size:20px;line-height:20px;color:#78828e;font-weight:400;letter-spacing:2.583px;">MANUFACTURING</div>
<div class="t" style="left:69.30px;top:586.10px;font-size:28px;line-height:28px;color:#e2e8f0;font-weight:400;letter-spacing:1.411px;">Production</div>
<div class="t" style="left:69.30px;top:658.10px;font-size:28px;line-height:28px;color:#e2e8f0;font-weight:400;letter-spacing:1.091px;">LineConnect+</div>
<div class="t" style="left:70.30px;top:730.10px;font-size:28px;line-height:28px;color:#e2e8f0;font-weight:400;letter-spacing:0.417px;">Quality</div>
<div class="t" style="left:23.40px;top:846.07px;font-size:20px;line-height:20px;color:#78828e;font-weight:400;letter-spacing:2.450px;">ANALYTICS</div>
<div class="t" style="left:69.30px;top:906.70px;font-size:28px;line-height:28px;color:#e2e8f0;font-weight:400;letter-spacing:0.617px;">Reports</div>
<div class="t" style="left:70.30px;top:978.60px;font-size:28px;line-height:28px;color:#e2e8f0;font-weight:400;letter-spacing:0.314px;">Turnover</div>
<div class="t" style="left:71.30px;top:1049.90px;font-size:28px;line-height:28px;color:#e2e8f0;font-weight:400;letter-spacing:0.136px;">ABC Analysis</div>
<div class="t" style="left:69.30px;top:1121.60px;font-size:28px;line-height:28px;color:#e2e8f0;font-weight:400;letter-spacing:0.670px;">Forecasting</div>
<div class="t" style="left:69.30px;top:1195.00px;font-size:28px;line-height:28px;color:#e2e8f0;font-weight:400;letter-spacing:0.808px;">Profitability</div>
<div class="t" style="left:69.30px;top:1302.60px;font-size:28px;line-height:28px;color:#9aa3b0;font-weight:400;letter-spacing:0.367px;">Bug Report</div>
<div class="t" style="left:69.30px;top:1374.00px;font-size:28px;line-height:28px;color:#9aa3b0;font-weight:400;letter-spacing:0.186px;">Feature Request</div>
<div class="t" style="left:102.00px;top:1473.50px;font-size:28px;line-height:28px;color:#e5e9f0;font-weight:700;letter-spacing:0.254px;">Sarah Mitchell</div>
<div class="t" style="left:102.00px;top:1507.88px;font-size:24px;line-height:24px;color:#858e9a;font-weight:400;letter-spacing:0.800px;">admin@frostbyte.io</div>
<div class="t" style="left:632.00px;top:35.30px;font-size:28px;line-height:28px;color:#020817;font-weight:400;letter-spacing:0.537px;">Dashboard</div>
<div class="t" style="left:2200.00px;top:35.60px;font-size:28px;line-height:28px;color:#586371;font-weight:400;letter-spacing:0.625px;">Search...</div>
<div class="t" style="left:2687.00px;top:37.88px;font-size:24px;line-height:24px;color:#3b82f6;font-weight:400;letter-spacing:1.000px;-webkit-text-stroke:0.6px #3b82f6;">SM</div>
<div class="t" style="left:2745.60px;top:19.90px;font-size:28px;line-height:28px;color:#020817;font-weight:400;letter-spacing:0.746px;-webkit-text-stroke:0.5px #020817;">Sarah Mitchell</div>
<div class="t" style="left:2745.60px;top:51.18px;font-size:24px;line-height:24px;color:#586371;font-weight:400;letter-spacing:0.753px;">admin@frostbyte.io</div>
<div class="t" style="left:645.60px;top:171.37px;font-size:48px;line-height:48px;color:#020817;font-weight:700;letter-spacing:-1.217px;">OEE Dashboard</div>
<div class="t" style="left:646.60px;top:232.40px;font-size:28px;line-height:28px;color:#586371;font-weight:400;letter-spacing:0.515px;">Overall Equipment Effectiveness tracking</div>
<div class="t" style="left:581.60px;top:340.60px;font-size:28px;line-height:28px;color:#556170;font-weight:400;letter-spacing:1.013px;">Dashboard</div>
<div class="t" style="left:782.40px;top:342.29px;font-size:26px;line-height:26px;color:#020817;font-weight:400;letter-spacing:-0.700px;-webkit-text-stroke:0.5px #020817;">OEE</div>
<div class="t" style="left:893.00px;top:340.60px;font-size:28px;line-height:28px;color:#556170;font-weight:400;letter-spacing:0.770px;">Consumables</div>
<div class="t" style="left:1129.70px;top:340.60px;font-size:28px;line-height:28px;color:#556170;font-weight:400;letter-spacing:0.725px;">Waste</div>
<div class="t" style="left:1266.00px;top:340.60px;font-size:28px;line-height:28px;color:#556170;font-weight:400;letter-spacing:0.667px;">Lines &amp; Machines</div>
<div class="t" style="left:770.00px;top:498.10px;font-size:28px;line-height:28px;color:#020817;font-weight:400;letter-spacing:0.709px;-webkit-text-stroke:0.5px #020817;">Availability</div>
<div class="t" style="left:766.01px;top:717.57px;font-size:48px;line-height:48px;color:#020817;font-weight:700;letter-spacing:0.000px;transform:scaleX(1.0881);transform-origin:0 0;">86.9%</div>
<div class="t" style="left:1366.70px;top:498.10px;font-size:28px;line-height:28px;color:#020817;font-weight:400;letter-spacing:1.050px;-webkit-text-stroke:0.5px #020817;">Performance</div>
<div class="t" style="left:1379.33px;top:717.57px;font-size:48px;line-height:48px;color:#020817;font-weight:700;letter-spacing:0.000px;transform:scaleX(1.0716);transform-origin:0 0;">82.2%</div>
<div class="t" style="left:2017.80px;top:498.10px;font-size:28px;line-height:28px;color:#020817;font-weight:400;letter-spacing:0.867px;-webkit-text-stroke:0.5px #020817;">Quality</div>
<div class="t" style="left:1989.53px;top:717.57px;font-size:48px;line-height:48px;color:#020817;font-weight:700;letter-spacing:0.000px;transform:scaleX(1.0865);transform-origin:0 0;">92.8%</div>
<div class="t" style="left:2598.60px;top:500.10px;font-size:28px;line-height:28px;color:#020817;font-weight:400;letter-spacing:-0.190px;-webkit-text-stroke:0.5px #020817;">Overall OEE</div>
<div class="t" style="left:2602.87px;top:719.57px;font-size:48px;line-height:48px;color:#020817;font-weight:700;letter-spacing:0.000px;transform:scaleX(1.0669);transform-origin:0 0;">66.7%</div>
<div class="t" style="left:2528.70px;top:891.38px;font-size:24px;line-height:24px;color:#586371;font-weight:400;letter-spacing:0.796px;">Typical (benchmark: 85%)</div>
<div class="t" style="left:600.40px;top:1101.21px;font-size:32px;line-height:32px;color:#020817;font-weight:700;letter-spacing:-0.688px;">OEE Trend</div>
<div class="t" style="left:671.90px;top:1202.48px;font-size:24px;line-height:24px;color:#556070;font-weight:400;letter-spacing:1.000px;">100</div>
<div class="t" style="left:685.80px;top:1322.48px;font-size:24px;line-height:24px;color:#556070;font-weight:400;letter-spacing:0.900px;">75</div>
<div class="t" style="left:684.00px;top:1451.58px;font-size:24px;line-height:24px;color:#556070;font-weight:400;letter-spacing:2.700px;">50</div>
<script>(function(){var s=window.innerWidth/2998;if(s>0&&Math.abs(s-1)>0.02){document.documentElement.style.zoom=s;}})();</script></body></html>
